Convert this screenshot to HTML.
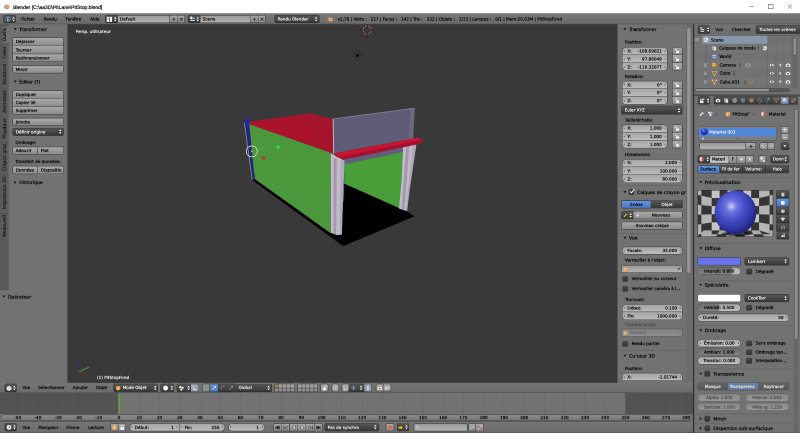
<!DOCTYPE html>
<html lang="fr"><head><meta charset="utf-8"><title>Blender</title>
<style>
html,body{margin:0;padding:0;background:#727272;overflow:hidden}
body{width:800px;height:433px;position:relative}
#o{position:absolute;left:0;top:0;width:1600px;height:866px;transform:scale(.5);transform-origin:0 0;will-change:transform;overflow:hidden}
#r{position:absolute;left:0;top:0;width:1920px;height:1040px;transform:scale(0.8333333);transform-origin:0 0;text-rendering:geometricPrecision;
 font-family:"DejaVu Sans","Liberation Sans",sans-serif;font-size:11px;color:#000;overflow:hidden;background:#727272}
#r div,#r span.t,#r svg{position:absolute;box-sizing:border-box}
#r span.t{line-height:16px;height:16px;white-space:nowrap;-webkit-text-stroke:0.45px currentColor}
.w{color:#fff;-webkit-text-stroke-width:.25px!important}.g{color:#4d4d4d}.lg{color:#e8e8e8}
.win{font-family:"Liberation Sans","DejaVu Sans",sans-serif;font-size:12px}
.b{border:1px solid #262626;border-radius:4px;background:linear-gradient(#a9a9a9,#8b8b8b);box-shadow:0 1px 0 rgba(255,255,255,.07)}
.num{border:1px solid #3a3a3a;border-radius:10px;background:linear-gradient(#a6a6a6,#bcbcbc);box-shadow:0 1px 0 rgba(255,255,255,.07)}
.tf{border:1px solid #262626;border-radius:4px;background:linear-gradient(#999,#b3b3b3);box-shadow:0 1px 0 rgba(255,255,255,.07)}
.m{border:1px solid #1c1c1c;border-radius:4px;background:linear-gradient(#575757,#373737);box-shadow:0 1px 0 rgba(255,255,255,.07)}
.sel{border:1px solid #1c1c1c;border-radius:4px;background:linear-gradient(#6197e0,#4878c4);box-shadow:0 1px 0 rgba(255,255,255,.07)}
.ck{border:1px solid #1c1c1c;border-radius:3px;background:linear-gradient(#4a4a4a,#323232);box-shadow:0 1px 0 rgba(255,255,255,.07)}
.sl{border:1px solid #3a3a3a;border-radius:10px;background:linear-gradient(#a8a8a8,#c2c2c2);box-shadow:0 1px 0 rgba(255,255,255,.07);overflow:hidden}
.sl i{position:absolute;left:0;top:0;bottom:0;background:linear-gradient(#6e6e6e,#828282);display:block}
.rt{border-bottom-left-radius:0!important;border-bottom-right-radius:0!important}
.rb{border-top-left-radius:0!important;border-top-right-radius:0!important}
.rn{border-radius:0!important}
.rl{border-top-right-radius:0!important;border-bottom-right-radius:0!important}
.rr{border-top-left-radius:0!important;border-bottom-left-radius:0!important}
.nt{border-top:none!important}.nl{border-left:none!important}
.dis{opacity:.45}
</style></head>
<body><div id="o"><div id="r">
<div style="left:0px;top:0px;width:1920px;height:31.7px;background:#fff"></div>
<div style="left:0px;top:31.7px;width:1920px;height:25.9px;background:linear-gradient(#777,#6a6a6a)"></div>
<div style="left:0px;top:57.6px;width:162px;height:639.6px;background:#727272"></div>
<div style="left:0px;top:57.6px;width:20.6px;height:639.6px;background:#595959"></div>
<div style="left:0px;top:697.2px;width:162px;height:222px;background:#727272;border-top:1px solid #7c7c7c"></div>
<div style="left:162px;top:57.6px;width:1320px;height:861.6px;background:#393939;border-left:2px solid #343434"></div>
<div style="left:1482px;top:57.6px;width:182.4px;height:861.6px;background:#727272"></div>
<div style="left:0px;top:919.2px;width:1664.4px;height:23.5px;background:linear-gradient(#767676,#6b6b6b)"></div>
<div style="left:0px;top:942.7px;width:1664.4px;height:51.4px;background:#535353"></div>
<div style="left:285.6px;top:942.7px;width:1215.6px;height:51.4px;background:#727272"></div>
<div style="left:0px;top:994.1px;width:1664.4px;height:16.8px;background:#727272"></div>
<div style="left:0px;top:1010.9px;width:1664.4px;height:28.3px;background:linear-gradient(#767676,#6b6b6b)"></div>
<div style="left:1665.6px;top:57.6px;width:254.4px;height:172.8px;background:#727272"></div>
<div style="left:1665.6px;top:57.6px;width:254.4px;height:27.4px;background:linear-gradient(#767676,#6b6b6b)"></div>
<div style="left:1665.6px;top:230.4px;width:254.4px;height:26.4px;background:linear-gradient(#767676,#6b6b6b);border-top:1px solid #3f3f3f"></div>
<div style="left:1665.6px;top:256.8px;width:254.4px;height:782.4px;background:#727272"></div>
<div style="left:0px;top:56.6px;width:1920px;height:1.4px;background:#4c4c4c"></div>
<div style="left:0px;top:1037.5px;width:1920px;height:1.9px;background:#454545"></div>
<svg style="left:7.7px;top:7.7px;" width="15.8" height="15.8" viewBox="0 0 16 16"><ellipse cx="9" cy="9" rx="6" ry="5" fill="#f5792a"/><circle cx="9.5" cy="9" r="2.8" fill="#fff"/><circle cx="9.5" cy="9" r="1.6" fill="#265787"/><path d="M1 8 L8 3.2 M2 10.5 L6 8" stroke="#f5792a" stroke-width="1.6" fill="none"/></svg>
<span class="t win" style="left:31.4px;top:8.8px;">Blender [C:\aa3D\PitLane\PitStop.blend]</span>
<svg style="left:1785.6px;top:4.8px;" width="124.8" height="21.6" viewBox="0 0 124.8 21.6"><path d="M12.8 10.6 H22.8" stroke="#222" stroke-width="1"/><rect x="58.2" y="5.2" width="11.2" height="10.8" fill="none" stroke="#222" stroke-width="1"/><path d="M104.8 5.4 L115 15.8 M115 5.4 L104.8 15.8" stroke="#222" stroke-width="1"/></svg>
<div class="m" style="left:7.9px;top:36px;width:29.8px;height:19.2px;"></div>
<svg style="left:11px;top:38.2px;" width="15.8" height="15.8" viewBox="0 0 16 16"><circle cx="8" cy="8" r="6.6" fill="#34506f" stroke="#7d94b4" stroke-width="1.3"/><rect x="7" y="6.8" width="2.2" height="5.4" fill="#fff"/><rect x="7" y="3.4" width="2.2" height="2.2" fill="#fff"/></svg>
<svg style="left:29px;top:38.6px;" width="7.2" height="13.9" viewBox="0 0 7.2 14"><path d="M0.6 5.6 L3.6 1.4 L6.6 5.6 Z M0.6 8.4 L3.6 12.6 L6.6 8.4 Z" fill="#fff"/></svg>
<span class="t" style="left:51.1px;top:38.8px;font-size:10px">Fichier</span>
<span class="t" style="left:104.6px;top:38.8px;font-size:10px">Rendu</span>
<span class="t" style="left:157.4px;top:38.8px;font-size:10px">Fenêtre</span>
<span class="t" style="left:216.5px;top:38.8px;font-size:10px">Aide</span>
<div class="m rl" style="left:251.8px;top:36px;width:31.2px;height:19.2px;"></div>
<svg style="left:255.4px;top:38.6px;" width="14.9" height="14.9" viewBox="0 0 15.4 15.4"><rect x="1" y="1.5" width="7" height="4.6" fill="#f2f2f2"/><rect x="1" y="7.4" width="7" height="6.6" fill="#f2f2f2"/><rect x="9.4" y="1.5" width="5" height="12.5" fill="#f2f2f2"/></svg>
<svg style="left:273.4px;top:38.6px;" width="7.2" height="13.9" viewBox="0 0 7.2 14"><path d="M0.6 5.6 L3.6 1.4 L6.6 5.6 Z M0.6 8.4 L3.6 12.6 L6.6 8.4 Z" fill="#fff"/></svg>
<div class="tf rn nl" style="left:283px;top:36px;width:125px;height:19.2px;"></div>
<span class="t" style="left:288px;top:38.8px;font-size:10px">Default</span>
<div class="b rn nl" style="left:408px;top:36px;width:17.8px;height:19.2px;"></div>
<svg style="left:410.9px;top:39.8px;" width="12" height="12" viewBox="0 0 12 12"><path d="M6 1.5 V10.5 M1.5 6 H10.5" stroke="#222" stroke-width="1.7"/></svg>
<div class="b rr nl" style="left:425.8px;top:36px;width:17.8px;height:19.2px;"></div>
<svg style="left:428.6px;top:39.8px;" width="12" height="12" viewBox="0 0 12 12"><path d="M2.5 2.5 L9.5 9.5 M9.5 2.5 L2.5 9.5" stroke="#222" stroke-width="1.7"/></svg>
<div class="m rl" style="left:450.7px;top:36px;width:30.2px;height:19.2px;"></div>
<svg style="left:453.6px;top:38.4px;" width="15.4" height="15.4" viewBox="0 0 16 16"><circle cx="5" cy="5" r="3" fill="#fff"/><circle cx="11" cy="6" r="2.6" fill="#9cc3f5"/><path d="M2 13 L7 8.5 L10 11.5 L13 9.5 L14.5 13 Z" fill="#e8e8e8"/></svg>
<svg style="left:471.1px;top:38.6px;" width="7.2" height="13.9" viewBox="0 0 7.2 14"><path d="M0.6 5.6 L3.6 1.4 L6.6 5.6 Z M0.6 8.4 L3.6 12.6 L6.6 8.4 Z" fill="#fff"/></svg>
<div class="tf rn nl" style="left:481px;top:36px;width:121px;height:19.2px;"></div>
<span class="t" style="left:486.2px;top:38.8px;font-size:10px">Scene</span>
<div class="b rn nl" style="left:601.9px;top:36px;width:17.8px;height:19.2px;"></div>
<svg style="left:604.8px;top:39.8px;" width="12" height="12" viewBox="0 0 12 12"><path d="M6 1.5 V10.5 M1.5 6 H10.5" stroke="#222" stroke-width="1.7"/></svg>
<div class="b rr nl" style="left:619.7px;top:36px;width:17.8px;height:19.2px;"></div>
<svg style="left:622.6px;top:39.8px;" width="12" height="12" viewBox="0 0 12 12"><path d="M2.5 2.5 L9.5 9.5 M9.5 2.5 L2.5 9.5" stroke="#222" stroke-width="1.7"/></svg>
<div class="m" style="left:658.6px;top:36px;width:108.5px;height:19.2px;"></div>
<span class="t w" style="left:666.2px;top:38.8px;font-size:10px">Rendu Blender</span>
<svg style="left:754.8px;top:38.6px;" width="7.2" height="13.9" viewBox="0 0 7.2 14"><path d="M0.6 5.6 L3.6 1.4 L6.6 5.6 Z M0.6 8.4 L3.6 12.6 L6.6 8.4 Z" fill="#fff"/></svg>
<svg style="left:784.3px;top:38.2px;" width="16.3" height="16.3" viewBox="0 0 16 16"><ellipse cx="9" cy="9" rx="6" ry="5" fill="#e8893a"/><circle cx="9.5" cy="9" r="2.9" fill="#fff"/><circle cx="9.5" cy="9" r="1.6" fill="#27548a"/><path d="M1 8 L8 3.2 M2 10.5 L6 8" stroke="#e8893a" stroke-width="1.6" fill="none"/></svg>
<span class="t" style="left:810.2px;top:38.8px;font-size:10px">v2.78 | Verts :&nbsp;&nbsp;&nbsp;217 | Faces :&nbsp;&nbsp;&nbsp;142 | Tris :&nbsp;&nbsp;&nbsp;332 | Objets :&nbsp;&nbsp;&nbsp;1/13 | Lampes :&nbsp;&nbsp;&nbsp;0/1 | Mem:20.63M | PitStopFond</span>
<div style="left:3.6px;top:63.1px;width:17.3px;height:39.7px;background:#727272;border:1px solid #3a3a3a;border-right:none;border-radius:4px 0 0 4px;box-shadow:0 1px 0 rgba(255,255,255,.10)"></div>
<span class="t" style="left:10.6px;top:75.0px;font-size:11px;transform:translateX(-50%) rotate(-90deg);transform-origin:50% 50%;color:#000">Outils</span>
<div style="left:3.6px;top:106.8px;width:17.3px;height:38px;background:#5f5f5f;border:1px solid #4b4b4b;border-right:none;border-radius:4px 0 0 4px;box-shadow:0 1px 0 rgba(255,255,255,.10)"></div>
<span class="t" style="left:10.6px;top:117.8px;font-size:11px;transform:translateX(-50%) rotate(-90deg);transform-origin:50% 50%;color:#151515">Créer</span>
<div style="left:3.6px;top:148.8px;width:17.3px;height:58.4px;background:#5f5f5f;border:1px solid #4b4b4b;border-right:none;border-radius:4px 0 0 4px;box-shadow:0 1px 0 rgba(255,255,255,.10)"></div>
<span class="t" style="left:10.6px;top:170.0px;font-size:11px;transform:translateX(-50%) rotate(-90deg);transform-origin:50% 50%;color:#151515">Relations</span>
<div style="left:3.6px;top:211.2px;width:17.3px;height:64.2px;background:#5f5f5f;border:1px solid #4b4b4b;border-right:none;border-radius:4px 0 0 4px;box-shadow:0 1px 0 rgba(255,255,255,.10)"></div>
<span class="t" style="left:10.6px;top:235.3px;font-size:11px;transform:translateX(-50%) rotate(-90deg);transform-origin:50% 50%;color:#151515">Animation</span>
<div style="left:3.6px;top:279.4px;width:17.3px;height:57.7px;background:#5f5f5f;border:1px solid #4b4b4b;border-right:none;border-radius:4px 0 0 4px;box-shadow:0 1px 0 rgba(255,255,255,.10)"></div>
<span class="t" style="left:10.6px;top:300.2px;font-size:11px;transform:translateX(-50%) rotate(-90deg);transform-origin:50% 50%;color:#151515">Physique</span>
<div style="left:3.6px;top:341px;width:17.3px;height:74.7px;background:#5f5f5f;border:1px solid #4b4b4b;border-right:none;border-radius:4px 0 0 4px;box-shadow:0 1px 0 rgba(255,255,255,.10)"></div>
<span class="t" style="left:10.6px;top:370.4px;font-size:11px;transform:translateX(-50%) rotate(-90deg);transform-origin:50% 50%;color:#151515">Crayon gras</span>
<div style="left:3.6px;top:419.8px;width:17.3px;height:87.2px;background:#5f5f5f;border:1px solid #4b4b4b;border-right:none;border-radius:4px 0 0 4px;box-shadow:0 1px 0 rgba(255,255,255,.10)"></div>
<span class="t" style="left:10.6px;top:455.4px;font-size:11px;transform:translateX(-50%) rotate(-90deg);transform-origin:50% 50%;color:#151515">Impression 3D</span>
<div style="left:3.6px;top:511px;width:17.3px;height:62.2px;background:#5f5f5f;border:1px solid #4b4b4b;border-right:none;border-radius:4px 0 0 4px;box-shadow:0 1px 0 rgba(255,255,255,.10)"></div>
<span class="t" style="left:10.6px;top:534.1px;font-size:11px;transform:translateX(-50%) rotate(-90deg);transform-origin:50% 50%;color:#151515">MeasureIt</span>
<svg style="left:32.6px;top:66.2px;" width="7.7" height="7.7" viewBox="0 0 9 9"><path d="M0 1.5 L9 1.5 L4.5 8 Z" fill="#1a1a1a"/></svg>
<span class="t" style="left:46.1px;top:63.3px;font-size:11px">Transformer</span>
<div class="b rt" style="left:30px;top:90.2px;width:123.1px;height:19.7px;"></div>
<span class="t" style="left:37.7px;top:93.3px;font-size:10px">Déplacer</span>
<div class="b rn nt" style="left:30px;top:109.9px;width:123.1px;height:19.7px;"></div>
<span class="t" style="left:37.7px;top:113.0px;font-size:10px">Tourner</span>
<div class="b rb nt" style="left:30px;top:129.6px;width:123.1px;height:19.7px;"></div>
<span class="t" style="left:37.7px;top:132.6px;font-size:10px">Redimensionner</span>
<div class="b" style="left:30px;top:157px;width:123.1px;height:18.7px;"></div>
<span class="t" style="left:37.7px;top:159.5px;font-size:10px">Miroir</span>
<svg style="left:32.6px;top:192px;" width="7.7" height="7.7" viewBox="0 0 9 9"><path d="M0 1.5 L9 1.5 L4.5 8 Z" fill="#1a1a1a"/></svg>
<span class="t" style="left:46.1px;top:189.0px;font-size:11px">Éditer (?)</span>
<div class="b rt" style="left:30px;top:217.4px;width:123.1px;height:19.2px;"></div>
<span class="t" style="left:37.7px;top:220.2px;font-size:10px">Dupliquer</span>
<div class="b rn nt" style="left:30px;top:236.6px;width:123.1px;height:19.2px;"></div>
<span class="t" style="left:37.7px;top:239.4px;font-size:10px">Copier lié</span>
<div class="b rb nt" style="left:30px;top:255.8px;width:123.1px;height:19.2px;"></div>
<span class="t" style="left:37.7px;top:258.6px;font-size:10px">Supprimer</span>
<div class="b" style="left:30px;top:283px;width:123.1px;height:19.2px;"></div>
<span class="t" style="left:37.7px;top:285.8px;font-size:10px">Joindre</span>
<div class="m" style="left:30px;top:306.7px;width:123.1px;height:19.2px;"></div>
<span class="t w" style="left:37.7px;top:309.5px;font-size:10px">Définir origine</span>
<svg style="left:140.9px;top:309.4px;" width="7.2" height="13.9" viewBox="0 0 7.2 14"><path d="M0.6 5.6 L3.6 1.4 L6.6 5.6 Z M0.6 8.4 L3.6 12.6 L6.6 8.4 Z" fill="#fff"/></svg>
<span class="t" style="left:37px;top:336.4px;font-size:10px">Ombrage:</span>
<div class="b rl" style="left:30px;top:352.3px;width:60.5px;height:19.2px;"></div>
<span class="t" style="left:37.7px;top:355.1px;font-size:10px">Adoucir</span>
<div class="b rr nl" style="left:90.5px;top:352.3px;width:62.6px;height:19.2px;"></div>
<span class="t" style="left:98.2px;top:355.1px;font-size:10px">Plat</span>
<span class="t" style="left:37px;top:381.0px;font-size:10px">Transfert de données:</span>
<div class="b rl" style="left:30px;top:398.4px;width:60.5px;height:19.2px;"></div>
<span class="t" style="left:37.7px;top:401.2px;font-size:10px">Données</span>
<div class="b rr nl" style="left:90.5px;top:398.4px;width:62.6px;height:19.2px;"></div>
<span class="t" style="left:98.2px;top:401.2px;font-size:10px">Dispositio</span>
<svg style="left:32.6px;top:433.9px;" width="7.7" height="7.7" viewBox="0 0 9 9"><path d="M1.5 0 L8 4.5 L1.5 9 Z" fill="#1a1a1a"/></svg>
<span class="t" style="left:46.1px;top:431.0px;font-size:11px">Historique</span>
<svg style="left:5.3px;top:708px;" width="7.7" height="7.7" viewBox="0 0 9 9"><path d="M0 1.5 L9 1.5 L4.5 8 Z" fill="#1a1a1a"/></svg>
<span class="t" style="left:18.7px;top:705.0px;font-size:11px">Opérateur</span>
<svg style="left:162px;top:57.6px" width="1320" height="861.6" viewBox="67.5 24 550 359">
<polygon points="252.6,180.2 343.2,246 414.4,216.2 406.4,210.8 401,208.6 344.2,183.2 344.2,200 330.6,232.8 254.5,178.6" fill="#000"/>
<polygon points="343,159 404.4,146.6 404.2,152 343.4,164.8" fill="#625d7c"/>
<polygon points="344.2,164.3 404,151.5 401.2,208.8 344.2,183.4" fill="#4a9e39"/>
<polygon points="249.2,123.8 333.3,153.4 331,160 330.6,232.9 254.6,178.7" fill="#4b983c"/>
<polygon points="245.4,123.2 249.2,123.6 254.6,178.6 252.8,179.6" fill="#1c2686"/>
<polyline points="244.4,123 252.2,179.8" fill="none" stroke="#aaa3b8" stroke-width="0.6"/>
<polygon points="249.6,121.4 311.5,113.1 322,116.4 332.8,118.5 333.4,153.6 249.4,124" fill="#a5132c"/>
<polygon points="249.6,122.4 300,115 318,136 296,140.6" fill="#b81431" opacity=".3"/>
<polygon points="332.8,118.7 414.8,108.1 413.1,138.4 333.5,153.2" fill="#5e5c76"/>
<polygon points="410.6,108.7 414.8,108.1 413.1,138.4 409.2,139.1" fill="#6a6883"/>
<polyline points="332.8,118.7 414.8,108.1" fill="none" stroke="#8685a0" stroke-width="0.7"/>
<polyline points="333.1,118.8 333.7,153.4" fill="none" stroke="#c9bfce" stroke-width="0.9"/>
<!-- left pillar -->
<polygon points="330.8,153.6 334,154.4 344.4,160.5 341.8,234.4 337,234.9 330.8,232.6" fill="#c2bac8"/>
<polygon points="333.6,158 336.8,159 336.2,234.2 333.6,233.4" fill="#a199ae"/>
<polygon points="340.6,160 344.4,160.8 341.8,234.2 339.8,234.6" fill="#b0a8ba"/>
<!-- right pillar -->
<polygon points="403.2,146 416.6,142.6 409.6,190 406.6,210.8 399,208.4 401.6,180" fill="#c2bac8"/>
<polygon points="406.2,146.4 409.4,145.6 404.4,209.8 401.6,209" fill="#a199ae"/>
<polygon points="412.8,144 416.6,142.8 409.8,188 407.2,210.6 405.6,210.2 409,180" fill="#b0a8ba"/>
<!-- awning -->
<polygon points="333.6,153.4 413.2,138.4 417.4,137.2 423.4,141 420.4,143.6 343,159.6 335.8,156.2" fill="#a3122a"/>
<polygon points="333.6,153.4 413.2,138.4 417.4,137.2 421.6,139.8 339.6,156.8" fill="#c81533"/>
<!-- manipulator -->
<polygon points="246.9,116 249.4,123.2 244.6,123.2" fill="#2020d8"/>
<polyline points="247.2,123 251.4,150" fill="none" stroke="#2a2ae8" stroke-width="0.6" opacity=".5"/>
<circle cx="251.8" cy="151.2" r="5.5" fill="none" stroke="#e6e6e6" stroke-width="0.7"/>
<circle cx="263.6" cy="157.8" r="1.7" fill="#e02a18"/>
<circle cx="278.2" cy="146.8" r="1.8" fill="#22e03a"/>
<polyline points="253,151.6 262,157" fill="none" stroke="#d0302a" stroke-width="0.5" opacity=".5"/>
<polyline points="253.6,150.8 276.6,147" fill="none" stroke="#30d040" stroke-width="0.5" opacity=".5"/>
<circle cx="251.8" cy="151.2" r="0.9" fill="#ffae3a"/>
<!-- 3D cursor -->
<g opacity=".6">
<circle cx="367.2" cy="29.8" r="4.2" fill="none" stroke="#f2eeee" stroke-width="0.65"/>
<circle cx="367.2" cy="29.8" r="4.2" fill="none" stroke="#b01818" stroke-width="0.65" stroke-dasharray="1.6 1.6"/>
<path d="M367.2 22 V27.4 M367.2 32.2 V37.6 M359.4 29.8 H364.8 M369.6 29.8 H375" stroke="#0a0a0a" stroke-width="0.55"/>
</g>
<!-- lamp -->
<circle cx="357.4" cy="55.2" r="1.5" fill="#050505"/>
<circle cx="357.4" cy="55.2" r="3.6" fill="none" stroke="#151515" stroke-width="0.5" stroke-dasharray="1 0.8" opacity=".8"/>
<circle cx="357.4" cy="55.2" r="5.2" fill="none" stroke="#1c1c1c" stroke-width="0.4" stroke-dasharray="1 1.1" opacity=".6"/>
<!-- mini axis -->
<path d="M78.5 371.6 L77.6 360.6" stroke="#2b2bd8" stroke-width="0.8" opacity=".9"/>
<path d="M78.5 371.6 L89 367" stroke="#2fbf3a" stroke-width="0.8"/>
<path d="M78.5 371.6 L86 374" stroke="#a02a2a" stroke-width="0.8" opacity=".8"/>
</svg>
<span class="t w" style="left:181.4px;top:69.0px;font-size:10px">Persp. utilisateur</span>
<span class="t w" style="left:232.8px;top:898.5px;font-size:10px">(1) PitStopFond</span>
<div class="m" style="left:10.8px;top:921.4px;width:29.5px;height:19.2px;"></div>
<svg style="left:14.2px;top:923.8px;" width="15.4" height="15.4" viewBox="0 0 16 16"><path d="M2 5 L8 2 L14 5 L14 12 L8 15 L2 12 Z" fill="#ededed"/><path d="M2 5 L8 8 L14 5 M8 8 V15" stroke="#9a9a9a" stroke-width="1" fill="none"/></svg>
<svg style="left:31.4px;top:924px;" width="7.2" height="13.9" viewBox="0 0 7.2 14"><path d="M0.6 5.6 L3.6 1.4 L6.6 5.6 Z M0.6 8.4 L3.6 12.6 L6.6 8.4 Z" fill="#fff"/></svg>
<span class="t" style="left:53.8px;top:924.2px;font-size:10px">Vue</span>
<span class="t" style="left:92.2px;top:924.2px;font-size:10px">Sélectionner</span>
<span class="t" style="left:174.7px;top:924.2px;font-size:10px">Ajouter</span>
<span class="t" style="left:230.2px;top:924.2px;font-size:10px">Objet</span>
<div class="m" style="left:271.9px;top:921.4px;width:107.5px;height:19.2px;"></div>
<svg style="left:276px;top:924px;" width="14.9" height="14.9" viewBox="0 0 16 16"><path d="M3 4.6 L9 2.4 L13.4 4.4 L13.4 11.6 L7.6 14 L3 11.6 Z" fill="#f0a24a"/><path d="M3 4.6 L7.6 6.8 L13.4 4.4 M7.6 6.8 V14" stroke="#fbe0b8" stroke-width="1.1" fill="none"/></svg>
<span class="t w" style="left:294.2px;top:924.2px;font-size:10px">Mode Objet</span>
<svg style="left:369.4px;top:924px;" width="7.2" height="13.9" viewBox="0 0 7.2 14"><path d="M0.6 5.6 L3.6 1.4 L6.6 5.6 Z M0.6 8.4 L3.6 12.6 L6.6 8.4 Z" fill="#fff"/></svg>
<div class="m" style="left:385px;top:921.4px;width:33.1px;height:19.2px;"></div>
<svg style="left:389.5px;top:924px;" width="14.9" height="14.9" viewBox="0 0 16 16"><circle cx="8" cy="8" r="6.3" fill="#f4f4f4"/><circle cx="6.2" cy="6" r="2" fill="#fff"/></svg>
<svg style="left:408.7px;top:924px;" width="7.2" height="13.9" viewBox="0 0 7.2 14"><path d="M0.6 5.6 L3.6 1.4 L6.6 5.6 Z M0.6 8.4 L3.6 12.6 L6.6 8.4 Z" fill="#fff"/></svg>
<div class="m rl" style="left:424.1px;top:921.4px;width:33.8px;height:19.2px;"></div>
<svg style="left:427.9px;top:924px;" width="15.4" height="15.4" viewBox="0 0 16 16"><circle cx="5" cy="5.4" r="3" fill="#f2f2f2"/><circle cx="11" cy="7" r="2.6" fill="#f2f2f2"/><circle cx="7.4" cy="11.6" r="2.6" fill="#f2f2f2"/><circle cx="8" cy="8" r="1.2" fill="#e8a13a"/></svg>
<svg style="left:448.8px;top:924px;" width="7.2" height="13.9" viewBox="0 0 7.2 14"><path d="M0.6 5.6 L3.6 1.4 L6.6 5.6 Z M0.6 8.4 L3.6 12.6 L6.6 8.4 Z" fill="#fff"/></svg>
<div class="b rr nl" style="left:457.9px;top:921.4px;width:20.6px;height:19.2px;background:linear-gradient(#9fa9b6,#8d97a4)"></div>
<svg style="left:460.8px;top:924.2px;" width="14.4" height="14.4" viewBox="0 0 16 16"><path d="M3 13 V4 M3 13 H12 M3 13 L9 8" stroke="#e8eef8" stroke-width="1.5" fill="none"/><circle cx="3" cy="4" r="1.3" fill="#dfe7f5"/><circle cx="12" cy="13" r="1.3" fill="#dfe7f5"/></svg>
<div class="b rl" style="left:484.8px;top:921.4px;width:19.7px;height:19.2px;background:linear-gradient(#8f9691,#7d857f)"></div>
<svg style="left:487.7px;top:924.2px;" width="14.4" height="14.4" viewBox="0 0 16 16"><path d="M3.4 12.6 V2.6" stroke="#5fd45f" stroke-width="1.6"/><path d="M3.4 12.6 H13.4" stroke="#e86a5a" stroke-width="1.6"/><path d="M3.4 12.6 L10.4 6.4" stroke="#6f8fe8" stroke-width="1.6"/></svg>
<div class="sel rn nl" style="left:504.5px;top:921.4px;width:19.4px;height:19.2px;"></div>
<svg style="left:507.4px;top:924.2px;" width="14.4" height="14.4" viewBox="0 0 16 16"><path d="M3 13 L12 4 M12 4 H7.5 M12 4 V8.5" stroke="#e6efff" stroke-width="1.7" fill="none"/></svg>
<div class="m rn nl" style="left:523.9px;top:921.4px;width:19.7px;height:19.2px;"></div>
<svg style="left:526.8px;top:924.2px;" width="14.4" height="14.4" viewBox="0 0 16 16"><path d="M4 13 C4 7 7 4 12 4" stroke="#7f95b8" stroke-width="1.6" fill="none"/></svg>
<div class="m rn nl" style="left:543.6px;top:921.4px;width:19.4px;height:19.2px;"></div>
<svg style="left:546.5px;top:924.2px;" width="14.4" height="14.4" viewBox="0 0 16 16"><path d="M3.5 13 L11 5.5" stroke="#8fa0bd" stroke-width="1.5" fill="none"/><rect x="9.6" y="3" width="3.6" height="3.6" fill="#a8b7d0"/></svg>
<div class="m rr nl" style="left:563px;top:921.4px;width:89.8px;height:19.2px;"></div>
<span class="t w" style="left:572.6px;top:924.2px;font-size:10px">Global</span>
<svg style="left:640.6px;top:924px;" width="7.2" height="13.9" viewBox="0 0 7.2 14"><path d="M0.6 5.6 L3.6 1.4 L6.6 5.6 Z M0.6 8.4 L3.6 12.6 L6.6 8.4 Z" fill="#fff"/></svg>
<div style="left:658.6px;top:921.4px;width:49px;height:19.2px;background:linear-gradient(#a6a6a6,#8a8a8a);border:1px solid #262626;border-radius:3px;box-shadow:0 1px 0 rgba(255,255,255,.07)"></div>
<div style="left:668.2px;top:922.1px;width:1px;height:17.8px;background:#2e2e2e"></div>
<div style="left:677.8px;top:922.1px;width:1px;height:17.8px;background:#2e2e2e"></div>
<div style="left:687.4px;top:922.1px;width:1px;height:17.8px;background:#2e2e2e"></div>
<div style="left:697px;top:922.1px;width:1px;height:17.8px;background:#2e2e2e"></div>
<div style="left:659.3px;top:930.7px;width:47.5px;height:1px;background:#2e2e2e"></div>
<div style="left:659.6px;top:922.4px;width:8.6px;height:8.4px;background:#6b6b6b"></div>
<div style="left:661.9px;top:924.5px;width:3.8px;height:3.8px;background:#f0a030;border-radius:50%"></div>
<div style="left:714.2px;top:921.4px;width:49px;height:19.2px;background:linear-gradient(#a6a6a6,#8a8a8a);border:1px solid #262626;border-radius:3px;box-shadow:0 1px 0 rgba(255,255,255,.07)"></div>
<div style="left:723.8px;top:922.1px;width:1px;height:17.8px;background:#2e2e2e"></div>
<div style="left:733.4px;top:922.1px;width:1px;height:17.8px;background:#2e2e2e"></div>
<div style="left:743px;top:922.1px;width:1px;height:17.8px;background:#2e2e2e"></div>
<div style="left:752.6px;top:922.1px;width:1px;height:17.8px;background:#2e2e2e"></div>
<div style="left:715px;top:930.7px;width:47.5px;height:1px;background:#2e2e2e"></div>
<div class="b" style="left:769px;top:921.4px;width:19.4px;height:19.2px;"></div>
<svg style="left:771.8px;top:924.2px;" width="14.4" height="14.4" viewBox="0 0 16 16"><rect x="3" y="7" width="9" height="7" fill="#f3f3f3"/><path d="M8.5 7 V5 a3 3 0 0 1 6 0 V6" stroke="#f3f3f3" stroke-width="1.6" fill="none"/></svg>
<div class="b" style="left:795.6px;top:921.4px;width:18.7px;height:19.2px;"></div>
<svg style="left:798px;top:924.2px;" width="14.4" height="14.4" viewBox="0 0 16 16"><circle cx="8" cy="8" r="5.4" fill="none" stroke="#d8d8d8" stroke-width="1.6"/><circle cx="8" cy="8" r="1.8" fill="#d8d8d8"/></svg>
<div class="b rl" style="left:819.6px;top:921.4px;width:18px;height:19.2px;"></div>
<svg style="left:821.8px;top:924.2px;" width="14.4" height="14.4" viewBox="0 0 16 16"><path d="M4 3 V9 a4 4 0 0 0 8 0 V3" stroke="#d6d6d6" stroke-width="2.6" fill="none"/></svg>
<div class="m rn nl" style="left:837.6px;top:921.4px;width:36px;height:19.2px;"></div>
<svg style="left:841.4px;top:924.2px;" width="14.4" height="14.4" viewBox="0 0 16 16"><path d="M8 2 V14 M2 8 H14" stroke="#a9c4ea" stroke-width="1.6"/><path d="M4 4 H12 V12 H4 Z" fill="none" stroke="#7f8da3" stroke-width="0.8"/></svg>
<svg style="left:862.8px;top:924px;" width="7.2" height="13.9" viewBox="0 0 7.2 14"><path d="M0.6 5.6 L3.6 1.4 L6.6 5.6 Z M0.6 8.4 L3.6 12.6 L6.6 8.4 Z" fill="#fff"/></svg>
<div class="b rr nl" style="left:873.6px;top:921.4px;width:18.5px;height:19.2px;background:linear-gradient(#9aa5b3,#8994a2)"></div>
<svg style="left:875.8px;top:924.2px;" width="14.4" height="14.4" viewBox="0 0 16 16"><circle cx="8" cy="5" r="2.6" fill="none" stroke="#eaf1fb" stroke-width="1.5"/><circle cx="8" cy="11.4" r="2.6" fill="none" stroke="#eaf1fb" stroke-width="1.5"/></svg>
<div class="b rl" style="left:901.7px;top:921.4px;width:18.7px;height:19.2px;"></div>
<svg style="left:903.8px;top:924.2px;" width="14.4" height="14.4" viewBox="0 0 16 16"><path d="M2 6 H5 L6.4 4 H10 L11.4 6 H14 V13 H2 Z" fill="#f2e8c8"/><circle cx="8" cy="9.4" r="2.4" fill="#7a6a4a"/></svg>
<div class="b rr nl" style="left:920.4px;top:921.4px;width:18.5px;height:19.2px;"></div>
<svg style="left:922.3px;top:924.2px;" width="14.4" height="14.4" viewBox="0 0 16 16"><rect x="2" y="3" width="12" height="10" fill="#efefef"/><path d="M2 5.5 H14 M2 10.5 H14 M5 3 V5.5 M8 3 V5.5 M11 3 V5.5 M5 10.5 V13 M8 10.5 V13 M11 10.5 V13" stroke="#555" stroke-width="1"/></svg>
<svg style="left:0;top:942.7px" width="1658.4" height="51.4" viewBox="0 392.8 691 21.4"><path d="M17.70 392.8 V414.2" stroke="#000" stroke-opacity=".13" stroke-width="0.42"/><path d="M37.96 392.8 V414.2" stroke="#000" stroke-opacity=".13" stroke-width="0.42"/><path d="M58.22 392.8 V414.2" stroke="#000" stroke-opacity=".13" stroke-width="0.42"/><path d="M78.48 392.8 V414.2" stroke="#000" stroke-opacity=".13" stroke-width="0.42"/><path d="M98.74 392.8 V414.2" stroke="#000" stroke-opacity=".13" stroke-width="0.42"/><path d="M119.00 392.8 V414.2" stroke="#000" stroke-opacity=".13" stroke-width="0.42"/><path d="M139.26 392.8 V414.2" stroke="#000" stroke-opacity=".13" stroke-width="0.42"/><path d="M159.52 392.8 V414.2" stroke="#000" stroke-opacity=".13" stroke-width="0.42"/><path d="M179.78 392.8 V414.2" stroke="#000" stroke-opacity=".13" stroke-width="0.42"/><path d="M200.04 392.8 V414.2" stroke="#000" stroke-opacity=".13" stroke-width="0.42"/><path d="M220.30 392.8 V414.2" stroke="#000" stroke-opacity=".13" stroke-width="0.42"/><path d="M240.56 392.8 V414.2" stroke="#000" stroke-opacity=".13" stroke-width="0.42"/><path d="M260.82 392.8 V414.2" stroke="#000" stroke-opacity=".13" stroke-width="0.42"/><path d="M281.08 392.8 V414.2" stroke="#000" stroke-opacity=".13" stroke-width="0.42"/><path d="M301.34 392.8 V414.2" stroke="#000" stroke-opacity=".13" stroke-width="0.42"/><path d="M321.60 392.8 V414.2" stroke="#000" stroke-opacity=".13" stroke-width="0.42"/><path d="M341.86 392.8 V414.2" stroke="#000" stroke-opacity=".13" stroke-width="0.42"/><path d="M362.12 392.8 V414.2" stroke="#000" stroke-opacity=".13" stroke-width="0.42"/><path d="M382.38 392.8 V414.2" stroke="#000" stroke-opacity=".13" stroke-width="0.42"/><path d="M402.64 392.8 V414.2" stroke="#000" stroke-opacity=".13" stroke-width="0.42"/><path d="M422.90 392.8 V414.2" stroke="#000" stroke-opacity=".13" stroke-width="0.42"/><path d="M443.16 392.8 V414.2" stroke="#000" stroke-opacity=".13" stroke-width="0.42"/><path d="M463.42 392.8 V414.2" stroke="#000" stroke-opacity=".13" stroke-width="0.42"/><path d="M483.68 392.8 V414.2" stroke="#000" stroke-opacity=".13" stroke-width="0.42"/><path d="M503.94 392.8 V414.2" stroke="#000" stroke-opacity=".13" stroke-width="0.42"/><path d="M524.20 392.8 V414.2" stroke="#000" stroke-opacity=".13" stroke-width="0.42"/><path d="M544.46 392.8 V414.2" stroke="#000" stroke-opacity=".13" stroke-width="0.42"/><path d="M564.72 392.8 V414.2" stroke="#000" stroke-opacity=".13" stroke-width="0.42"/><path d="M584.98 392.8 V414.2" stroke="#000" stroke-opacity=".13" stroke-width="0.42"/><path d="M605.24 392.8 V414.2" stroke="#000" stroke-opacity=".13" stroke-width="0.42"/><path d="M625.50 392.8 V414.2" stroke="#000" stroke-opacity=".13" stroke-width="0.42"/><path d="M645.76 392.8 V414.2" stroke="#000" stroke-opacity=".13" stroke-width="0.42"/><path d="M666.02 392.8 V414.2" stroke="#000" stroke-opacity=".13" stroke-width="0.42"/><path d="M686.28 392.8 V414.2" stroke="#000" stroke-opacity=".13" stroke-width="0.42"/><path d="M0 407.4 H691" stroke="#000" stroke-opacity="0" stroke-width="0.4"/><path d="M119 392.8 V414.2" stroke="#62d020" stroke-width="0.95"/></svg>
<div style="left:2.9px;top:995.3px;width:1658.4px;height:13.7px;background:linear-gradient(#8a8a8a,#7a7a7a);border:1px solid #3e3e3e;border-radius:5px"></div>
<span class="t" style="left:-77.5px;width:240px;text-align:center;top:996.4px;font-size:10px">-50</span>
<span class="t" style="left:-28.9px;width:240px;text-align:center;top:996.4px;font-size:10px">-40</span>
<span class="t" style="left:19.7px;width:240px;text-align:center;top:996.4px;font-size:10px">-30</span>
<span class="t" style="left:68.4px;width:240px;text-align:center;top:996.4px;font-size:10px">-20</span>
<span class="t" style="left:117px;width:240px;text-align:center;top:996.4px;font-size:10px">-10</span>
<span class="t" style="left:165.6px;width:240px;text-align:center;top:996.4px;font-size:10px">0</span>
<span class="t" style="left:214.2px;width:240px;text-align:center;top:996.4px;font-size:10px">10</span>
<span class="t" style="left:262.8px;width:240px;text-align:center;top:996.4px;font-size:10px">20</span>
<span class="t" style="left:311.5px;width:240px;text-align:center;top:996.4px;font-size:10px">30</span>
<span class="t" style="left:360.1px;width:240px;text-align:center;top:996.4px;font-size:10px">40</span>
<span class="t" style="left:408.7px;width:240px;text-align:center;top:996.4px;font-size:10px">50</span>
<span class="t" style="left:457.3px;width:240px;text-align:center;top:996.4px;font-size:10px">60</span>
<span class="t" style="left:506px;width:240px;text-align:center;top:996.4px;font-size:10px">70</span>
<span class="t" style="left:554.6px;width:240px;text-align:center;top:996.4px;font-size:10px">80</span>
<span class="t" style="left:603.2px;width:240px;text-align:center;top:996.4px;font-size:10px">90</span>
<span class="t" style="left:651.8px;width:240px;text-align:center;top:996.4px;font-size:10px">100</span>
<span class="t" style="left:700.5px;width:240px;text-align:center;top:996.4px;font-size:10px">110</span>
<span class="t" style="left:749.1px;width:240px;text-align:center;top:996.4px;font-size:10px">120</span>
<span class="t" style="left:797.7px;width:240px;text-align:center;top:996.4px;font-size:10px">130</span>
<span class="t" style="left:846.3px;width:240px;text-align:center;top:996.4px;font-size:10px">140</span>
<span class="t" style="left:895px;width:240px;text-align:center;top:996.4px;font-size:10px">150</span>
<span class="t" style="left:943.6px;width:240px;text-align:center;top:996.4px;font-size:10px">160</span>
<span class="t" style="left:992.2px;width:240px;text-align:center;top:996.4px;font-size:10px">170</span>
<span class="t" style="left:1040.8px;width:240px;text-align:center;top:996.4px;font-size:10px">180</span>
<span class="t" style="left:1089.5px;width:240px;text-align:center;top:996.4px;font-size:10px">190</span>
<span class="t" style="left:1138.1px;width:240px;text-align:center;top:996.4px;font-size:10px">200</span>
<span class="t" style="left:1186.7px;width:240px;text-align:center;top:996.4px;font-size:10px">210</span>
<span class="t" style="left:1235.3px;width:240px;text-align:center;top:996.4px;font-size:10px">220</span>
<span class="t" style="left:1284px;width:240px;text-align:center;top:996.4px;font-size:10px">230</span>
<span class="t" style="left:1332.6px;width:240px;text-align:center;top:996.4px;font-size:10px">240</span>
<span class="t" style="left:1381.2px;width:240px;text-align:center;top:996.4px;font-size:10px">250</span>
<span class="t" style="left:1429.8px;width:240px;text-align:center;top:996.4px;font-size:10px">260</span>
<span class="t" style="left:1478.4px;width:240px;text-align:center;top:996.4px;font-size:10px">270</span>
<span class="t" style="left:1527.1px;width:240px;text-align:center;top:996.4px;font-size:10px">280</span>
<div style="left:0px;top:941.8px;width:1658.4px;height:1.2px;background:#454545"></div>
<div style="left:0px;top:1010.4px;width:1658.4px;height:1.2px;background:#4f4f4f"></div>
<div class="m" style="left:10.8px;top:1015.7px;width:29.5px;height:19.2px;"></div>
<svg style="left:14.2px;top:1018.1px;" width="15.4" height="15.4" viewBox="0 0 16 16"><circle cx="8" cy="8" r="6" fill="#f0f0f0"/><path d="M8 4 V8 L11 10" stroke="#333" stroke-width="1.4" fill="none"/></svg>
<svg style="left:31.4px;top:1018.3px;" width="7.2" height="13.9" viewBox="0 0 7.2 14"><path d="M0.6 5.6 L3.6 1.4 L6.6 5.6 Z M0.6 8.4 L3.6 12.6 L6.6 8.4 Z" fill="#fff"/></svg>
<span class="t" style="left:53.8px;top:1018.5px;font-size:10px">Vue</span>
<span class="t" style="left:92.2px;top:1018.5px;font-size:10px">Marqueur</span>
<span class="t" style="left:159.4px;top:1018.5px;font-size:10px">Frame</span>
<span class="t" style="left:211.7px;top:1018.5px;font-size:10px">Lecture</span>
<div class="b rl" style="left:265.4px;top:1015.7px;width:18.2px;height:19.2px;"></div>
<svg style="left:267.4px;top:1018.6px;" width="14.4" height="14.4" viewBox="0 0 16 16"><circle cx="8" cy="8" r="5.6" fill="#f2b24a"/><path d="M8 4.4 V8 L10.6 9.6" stroke="#fff" stroke-width="1.5" fill="none"/></svg>
<div class="b rr nl" style="left:283.7px;top:1015.7px;width:18.2px;height:19.2px;"></div>
<svg style="left:285.6px;top:1018.6px;" width="14.4" height="14.4" viewBox="0 0 16 16"><rect x="3" y="7" width="10" height="7" fill="#f3f3f3"/><path d="M5 7 V5 a3 3 0 0 1 6 0 V7" stroke="#f3f3f3" stroke-width="1.6" fill="none"/></svg>
<div class="num rl" style="left:310.6px;top:1015.7px;width:120px;height:19.2px;"></div>
<svg style="left:313.9px;top:1022.4px;" width="3.8" height="5.8" viewBox="0 0 3.84 5.76"><path d="M3.4 0.4 L0.6 2.9 L3.4 5.4 Z" fill="#5a5a5a"/></svg>
<svg style="left:423.4px;top:1022.4px;" width="3.8" height="5.8" viewBox="0 0 3.84 5.76"><path d="M0.4 0.4 L3.2 2.9 L0.4 5.4 Z" fill="#5a5a5a"/></svg>
<span class="t" style="left:323.5px;top:1018.5px;font-size:10px">Début:</span>
<span class="t" style="right:1502.9px;top:1018.5px;font-size:10px">1</span>
<div class="num rr nl" style="left:430.6px;top:1015.7px;width:109.4px;height:19.2px;"></div>
<svg style="left:433.9px;top:1022.4px;" width="3.8" height="5.8" viewBox="0 0 3.84 5.76"><path d="M3.4 0.4 L0.6 2.9 L3.4 5.4 Z" fill="#5a5a5a"/></svg>
<svg style="left:532.8px;top:1022.4px;" width="3.8" height="5.8" viewBox="0 0 3.84 5.76"><path d="M0.4 0.4 L3.2 2.9 L0.4 5.4 Z" fill="#5a5a5a"/></svg>
<span class="t" style="left:443.5px;top:1018.5px;font-size:10px">Fin:</span>
<span class="t" style="right:1393.4px;top:1018.5px;font-size:10px">250</span>
<div class="num" style="left:547.7px;top:1015.7px;width:87.4px;height:19.2px;"></div>
<svg style="left:551px;top:1022.4px;" width="3.8" height="5.8" viewBox="0 0 3.84 5.76"><path d="M3.4 0.4 L0.6 2.9 L3.4 5.4 Z" fill="#5a5a5a"/></svg>
<svg style="left:627.8px;top:1022.4px;" width="3.8" height="5.8" viewBox="0 0 3.84 5.76"><path d="M0.4 0.4 L3.2 2.9 L0.4 5.4 Z" fill="#5a5a5a"/></svg>
<span class="t" style="right:1298.4px;top:1018.5px;font-size:10px">1</span>
<div class="b rl" style="left:656.2px;top:1015.7px;width:19.7px;height:19.2px;"></div>
<svg style="left:659px;top:1018.6px;" width="14.4" height="14.4" viewBox="0 0 16 16"><path d="M3 3 V13 M13 3 L8 8 L13 13 Z M8.6 3 L3.6 8 L8.6 13 Z" fill="#222" stroke="#222" stroke-width="1.2"/></svg>
<div class="b rn nl" style="left:675.8px;top:1015.7px;width:19.7px;height:19.2px;"></div>
<svg style="left:678.7px;top:1018.6px;" width="14.4" height="14.4" viewBox="0 0 16 16"><path d="M3 3 V13" stroke="#222" stroke-width="1.6"/><path d="M12.6 3 L5 8 L12.6 13 Z" fill="#222"/><rect x="9" y="6" width="3" height="4" fill="#ddd"/></svg>
<div class="b rn nl" style="left:695.5px;top:1015.7px;width:19.7px;height:19.2px;"></div>
<svg style="left:698.4px;top:1018.6px;" width="14.4" height="14.4" viewBox="0 0 16 16"><path d="M12 3 L4 8 L12 13 Z" fill="#f4f4f4" stroke="#222" stroke-width="1"/></svg>
<div class="b rn nl" style="left:715.2px;top:1015.7px;width:19.7px;height:19.2px;"></div>
<svg style="left:718.1px;top:1018.6px;" width="14.4" height="14.4" viewBox="0 0 16 16"><path d="M4 3 L12 8 L4 13 Z" fill="#f4f4f4" stroke="#222" stroke-width="1"/></svg>
<div class="b rn nl" style="left:734.9px;top:1015.7px;width:19.7px;height:19.2px;"></div>
<svg style="left:737.8px;top:1018.6px;" width="14.4" height="14.4" viewBox="0 0 16 16"><path d="M13 3 V13" stroke="#222" stroke-width="1.6"/><path d="M3.4 3 L11 8 L3.4 13 Z" fill="#222"/><rect x="4" y="6" width="3" height="4" fill="#ddd"/></svg>
<div class="b rr nl" style="left:754.6px;top:1015.7px;width:19.7px;height:19.2px;"></div>
<svg style="left:757.4px;top:1018.6px;" width="14.4" height="14.4" viewBox="0 0 16 16"><path d="M13 3 V13 M3 3 L8 8 L3 13 Z M7.4 3 L12.4 8 L7.4 13 Z" fill="#222" stroke="#222" stroke-width="1.2"/></svg>
<div class="m" style="left:779px;top:1015.7px;width:130.6px;height:19.2px;"></div>
<span class="t w" style="left:786.7px;top:1018.5px;font-size:10px">Pas de synchro</span>
<svg style="left:897.4px;top:1018.3px;" width="7.2" height="13.9" viewBox="0 0 7.2 14"><path d="M0.6 5.6 L3.6 1.4 L6.6 5.6 Z M0.6 8.4 L3.6 12.6 L6.6 8.4 Z" fill="#fff"/></svg>
<div class="b" style="left:926.4px;top:1015.7px;width:19.7px;height:19.2px;"></div>
<div style="left:931.7px;top:1021px;width:9.1px;height:9.1px;background:#e8603c;border-radius:50%"></div>
<div class="m rl" style="left:952.8px;top:1015.7px;width:9.6px;height:19.2px;"></div>
<div class="m rr nl" style="left:962.4px;top:1015.7px;width:19.2px;height:19.2px;"></div>
<svg style="left:954.2px;top:1019px;" width="14.4" height="14.4" viewBox="0 0 16 16"><path d="M2 6 H8 V3 L14 8 L8 13 V10 H2 Z" fill="#f0d020"/></svg>
<svg style="left:972.2px;top:1018.3px;" width="7.2" height="13.9" viewBox="0 0 7.2 14"><path d="M0.6 5.6 L3.6 1.4 L6.6 5.6 Z M0.6 8.4 L3.6 12.6 L6.6 8.4 Z" fill="#fff"/></svg>
<div class="tf" style="left:992.6px;top:1015.7px;width:129.1px;height:19.2px;"></div>
<svg style="left:996px;top:1018.6px;" width="14.4" height="14.4" viewBox="0 0 16 16"><path d="M3 3 H7 V7 H3 Z M7 7 L12 12" stroke="#ddd" stroke-width="1.3" fill="none"/></svg>
<div class="b rl" style="left:1124.2px;top:1015.7px;width:18.2px;height:19.2px;"></div>
<svg style="left:1126.1px;top:1018.6px;" width="14.4" height="14.4" viewBox="0 0 16 16"><path d="M3 13 L13 3" stroke="#ddd" stroke-width="1.6"/></svg>
<div class="b rr nl" style="left:1142.4px;top:1015.7px;width:18.2px;height:19.2px;"></div>
<svg style="left:1144.3px;top:1018.6px;" width="14.4" height="14.4" viewBox="0 0 16 16"><path d="M3 13 L13 3" stroke="#ddd" stroke-width="1.6"/><path d="M3 3 L13 13" stroke="#e03030" stroke-width="1.4"/></svg>
<div style="left:1663.2px;top:57.6px;width:2.6px;height:981.6px;background:#2e2e2e"></div>
<div style="left:1647.4px;top:58.6px;width:13.9px;height:860.2px;background:rgba(0,0,0,.05)"></div>
<div style="left:1648.3px;top:65.5px;width:10.8px;height:590.4px;background:linear-gradient(90deg,#9c9c9c,#8e8e8e);border:1px solid #5e5e5e;border-radius:6px"></div>
<svg style="left:1496.2px;top:66.2px;" width="7.7" height="7.7" viewBox="0 0 9 9"><path d="M0 1.5 L9 1.5 L4.5 8 Z" fill="#1a1a1a"/></svg>
<span class="t" style="left:1509.6px;top:63.3px;font-size:11px">Transformer</span>
<span class="t" style="left:1500px;top:94.0px;font-size:10px">Position:</span>
<div class="num rt" style="left:1492.8px;top:112.8px;width:109px;height:19.2px;"></div>
<svg style="left:1496.2px;top:119.5px;" width="3.8" height="5.8" viewBox="0 0 3.84 5.76"><path d="M3.4 0.4 L0.6 2.9 L3.4 5.4 Z" fill="#5a5a5a"/></svg>
<svg style="left:1594.6px;top:119.5px;" width="3.8" height="5.8" viewBox="0 0 3.84 5.76"><path d="M0.4 0.4 L3.2 2.9 L0.4 5.4 Z" fill="#5a5a5a"/></svg>
<span class="t" style="left:1505.8px;top:115.6px;font-size:10px">X:</span>
<span class="t" style="right:331.7px;top:115.6px;font-size:10px">-108.69021</span>
<div class="b rt" style="left:1612.8px;top:112.8px;width:25px;height:19.2px;"></div>
<svg style="left:1618.6px;top:115.9px;" width="13.4" height="13.4" viewBox="0 0 16 16"><rect x="4" y="7.6" width="9" height="6.4" fill="#f4f4f4"/><path d="M5.4 7.6 V5.4 a2.6 2.6 0 0 0 -5.2 0 V6.4" transform="translate(1.6,0)" stroke="#f4f4f4" stroke-width="1.5" fill="none"/></svg>
<div class="num rn nt" style="left:1492.8px;top:132px;width:109px;height:19.2px;"></div>
<svg style="left:1496.2px;top:138.7px;" width="3.8" height="5.8" viewBox="0 0 3.84 5.76"><path d="M3.4 0.4 L0.6 2.9 L3.4 5.4 Z" fill="#5a5a5a"/></svg>
<svg style="left:1594.6px;top:138.7px;" width="3.8" height="5.8" viewBox="0 0 3.84 5.76"><path d="M0.4 0.4 L3.2 2.9 L0.4 5.4 Z" fill="#5a5a5a"/></svg>
<span class="t" style="left:1505.8px;top:134.8px;font-size:10px">Y:</span>
<span class="t" style="right:331.7px;top:134.8px;font-size:10px">97.86049</span>
<div class="b rn nt" style="left:1612.8px;top:132px;width:25px;height:19.2px;"></div>
<svg style="left:1618.6px;top:135.1px;" width="13.4" height="13.4" viewBox="0 0 16 16"><rect x="4" y="7.6" width="9" height="6.4" fill="#f4f4f4"/><path d="M5.4 7.6 V5.4 a2.6 2.6 0 0 0 -5.2 0 V6.4" transform="translate(1.6,0)" stroke="#f4f4f4" stroke-width="1.5" fill="none"/></svg>
<div class="num rb nt" style="left:1492.8px;top:151.2px;width:109px;height:19.2px;"></div>
<svg style="left:1496.2px;top:157.9px;" width="3.8" height="5.8" viewBox="0 0 3.84 5.76"><path d="M3.4 0.4 L0.6 2.9 L3.4 5.4 Z" fill="#5a5a5a"/></svg>
<svg style="left:1594.6px;top:157.9px;" width="3.8" height="5.8" viewBox="0 0 3.84 5.76"><path d="M0.4 0.4 L3.2 2.9 L0.4 5.4 Z" fill="#5a5a5a"/></svg>
<span class="t" style="left:1505.8px;top:154.0px;font-size:10px">Z:</span>
<span class="t" style="right:331.7px;top:154.0px;font-size:10px">-116.32077</span>
<div class="b rb nt" style="left:1612.8px;top:151.2px;width:25px;height:19.2px;"></div>
<svg style="left:1618.6px;top:154.3px;" width="13.4" height="13.4" viewBox="0 0 16 16"><rect x="4" y="7.6" width="9" height="6.4" fill="#f4f4f4"/><path d="M5.4 7.6 V5.4 a2.6 2.6 0 0 0 -5.2 0 V6.4" transform="translate(1.6,0)" stroke="#f4f4f4" stroke-width="1.5" fill="none"/></svg>
<span class="t" style="left:1500px;top:176.6px;font-size:10px">Rotation:</span>
<div class="num rt" style="left:1492.8px;top:193.7px;width:109px;height:19.2px;"></div>
<svg style="left:1496.2px;top:200.4px;" width="3.8" height="5.8" viewBox="0 0 3.84 5.76"><path d="M3.4 0.4 L0.6 2.9 L3.4 5.4 Z" fill="#5a5a5a"/></svg>
<svg style="left:1594.6px;top:200.4px;" width="3.8" height="5.8" viewBox="0 0 3.84 5.76"><path d="M0.4 0.4 L3.2 2.9 L0.4 5.4 Z" fill="#5a5a5a"/></svg>
<span class="t" style="left:1505.8px;top:196.5px;font-size:10px">X:</span>
<span class="t" style="right:331.7px;top:196.5px;font-size:10px">0°</span>
<div class="b rt" style="left:1612.8px;top:193.7px;width:25px;height:19.2px;"></div>
<svg style="left:1618.6px;top:196.8px;" width="13.4" height="13.4" viewBox="0 0 16 16"><rect x="4" y="7.6" width="9" height="6.4" fill="#f4f4f4"/><path d="M5.4 7.6 V5.4 a2.6 2.6 0 0 0 -5.2 0 V6.4" transform="translate(1.6,0)" stroke="#f4f4f4" stroke-width="1.5" fill="none"/></svg>
<div class="num rn nt" style="left:1492.8px;top:212.9px;width:109px;height:19.2px;"></div>
<svg style="left:1496.2px;top:219.6px;" width="3.8" height="5.8" viewBox="0 0 3.84 5.76"><path d="M3.4 0.4 L0.6 2.9 L3.4 5.4 Z" fill="#5a5a5a"/></svg>
<svg style="left:1594.6px;top:219.6px;" width="3.8" height="5.8" viewBox="0 0 3.84 5.76"><path d="M0.4 0.4 L3.2 2.9 L0.4 5.4 Z" fill="#5a5a5a"/></svg>
<span class="t" style="left:1505.8px;top:215.7px;font-size:10px">Y:</span>
<span class="t" style="right:331.7px;top:215.7px;font-size:10px">0°</span>
<div class="b rn nt" style="left:1612.8px;top:212.9px;width:25px;height:19.2px;"></div>
<svg style="left:1618.6px;top:216px;" width="13.4" height="13.4" viewBox="0 0 16 16"><rect x="4" y="7.6" width="9" height="6.4" fill="#f4f4f4"/><path d="M5.4 7.6 V5.4 a2.6 2.6 0 0 0 -5.2 0 V6.4" transform="translate(1.6,0)" stroke="#f4f4f4" stroke-width="1.5" fill="none"/></svg>
<div class="num rb nt" style="left:1492.8px;top:232.1px;width:109px;height:19.2px;"></div>
<svg style="left:1496.2px;top:238.8px;" width="3.8" height="5.8" viewBox="0 0 3.84 5.76"><path d="M3.4 0.4 L0.6 2.9 L3.4 5.4 Z" fill="#5a5a5a"/></svg>
<svg style="left:1594.6px;top:238.8px;" width="3.8" height="5.8" viewBox="0 0 3.84 5.76"><path d="M0.4 0.4 L3.2 2.9 L0.4 5.4 Z" fill="#5a5a5a"/></svg>
<span class="t" style="left:1505.8px;top:234.9px;font-size:10px">Z:</span>
<span class="t" style="right:331.7px;top:234.9px;font-size:10px">0°</span>
<div class="b rb nt" style="left:1612.8px;top:232.1px;width:25px;height:19.2px;"></div>
<svg style="left:1618.6px;top:235.2px;" width="13.4" height="13.4" viewBox="0 0 16 16"><rect x="4" y="7.6" width="9" height="6.4" fill="#f4f4f4"/><path d="M5.4 7.6 V5.4 a2.6 2.6 0 0 0 -5.2 0 V6.4" transform="translate(1.6,0)" stroke="#f4f4f4" stroke-width="1.5" fill="none"/></svg>
<div class="m" style="left:1491.4px;top:254.4px;width:146.9px;height:20.2px;"></div>
<span class="t w" style="left:1499px;top:257.7px;font-size:10px">Euler XYZ</span>
<svg style="left:1626px;top:257.5px;" width="7.2" height="13.9" viewBox="0 0 7.2 14"><path d="M0.6 5.6 L3.6 1.4 L6.6 5.6 Z M0.6 8.4 L3.6 12.6 L6.6 8.4 Z" fill="#fff"/></svg>
<span class="t" style="left:1500px;top:281.7px;font-size:10px">Taille/échelle:</span>
<div class="num rt" style="left:1492.8px;top:298.6px;width:109px;height:19.2px;"></div>
<svg style="left:1496.2px;top:305.3px;" width="3.8" height="5.8" viewBox="0 0 3.84 5.76"><path d="M3.4 0.4 L0.6 2.9 L3.4 5.4 Z" fill="#5a5a5a"/></svg>
<svg style="left:1594.6px;top:305.3px;" width="3.8" height="5.8" viewBox="0 0 3.84 5.76"><path d="M0.4 0.4 L3.2 2.9 L0.4 5.4 Z" fill="#5a5a5a"/></svg>
<span class="t" style="left:1505.8px;top:301.4px;font-size:10px">X:</span>
<span class="t" style="right:331.7px;top:301.4px;font-size:10px">1.000</span>
<div class="b rt" style="left:1612.8px;top:298.6px;width:25px;height:19.2px;"></div>
<svg style="left:1618.6px;top:301.7px;" width="13.4" height="13.4" viewBox="0 0 16 16"><rect x="4" y="7.6" width="9" height="6.4" fill="#f4f4f4"/><path d="M5.4 7.6 V5.4 a2.6 2.6 0 0 0 -5.2 0 V6.4" transform="translate(1.6,0)" stroke="#f4f4f4" stroke-width="1.5" fill="none"/></svg>
<div class="num rn nt" style="left:1492.8px;top:317.8px;width:109px;height:19.2px;"></div>
<svg style="left:1496.2px;top:324.5px;" width="3.8" height="5.8" viewBox="0 0 3.84 5.76"><path d="M3.4 0.4 L0.6 2.9 L3.4 5.4 Z" fill="#5a5a5a"/></svg>
<svg style="left:1594.6px;top:324.5px;" width="3.8" height="5.8" viewBox="0 0 3.84 5.76"><path d="M0.4 0.4 L3.2 2.9 L0.4 5.4 Z" fill="#5a5a5a"/></svg>
<span class="t" style="left:1505.8px;top:320.6px;font-size:10px">Y:</span>
<span class="t" style="right:331.7px;top:320.6px;font-size:10px">1.000</span>
<div class="b rn nt" style="left:1612.8px;top:317.8px;width:25px;height:19.2px;"></div>
<svg style="left:1618.6px;top:320.9px;" width="13.4" height="13.4" viewBox="0 0 16 16"><rect x="4" y="7.6" width="9" height="6.4" fill="#f4f4f4"/><path d="M5.4 7.6 V5.4 a2.6 2.6 0 0 0 -5.2 0 V6.4" transform="translate(1.6,0)" stroke="#f4f4f4" stroke-width="1.5" fill="none"/></svg>
<div class="num rb nt" style="left:1492.8px;top:337px;width:109px;height:19.2px;"></div>
<svg style="left:1496.2px;top:343.7px;" width="3.8" height="5.8" viewBox="0 0 3.84 5.76"><path d="M3.4 0.4 L0.6 2.9 L3.4 5.4 Z" fill="#5a5a5a"/></svg>
<svg style="left:1594.6px;top:343.7px;" width="3.8" height="5.8" viewBox="0 0 3.84 5.76"><path d="M0.4 0.4 L3.2 2.9 L0.4 5.4 Z" fill="#5a5a5a"/></svg>
<span class="t" style="left:1505.8px;top:339.8px;font-size:10px">Z:</span>
<span class="t" style="right:331.7px;top:339.8px;font-size:10px">1.000</span>
<div class="b rb nt" style="left:1612.8px;top:337px;width:25px;height:19.2px;"></div>
<svg style="left:1618.6px;top:340.1px;" width="13.4" height="13.4" viewBox="0 0 16 16"><rect x="4" y="7.6" width="9" height="6.4" fill="#f4f4f4"/><path d="M5.4 7.6 V5.4 a2.6 2.6 0 0 0 -5.2 0 V6.4" transform="translate(1.6,0)" stroke="#f4f4f4" stroke-width="1.5" fill="none"/></svg>
<span class="t" style="left:1500px;top:363.8px;font-size:10px">Dimensions:</span>
<div class="num rt" style="left:1492.8px;top:381.6px;width:145.4px;height:19.2px;"></div>
<svg style="left:1496.2px;top:388.3px;" width="3.8" height="5.8" viewBox="0 0 3.84 5.76"><path d="M3.4 0.4 L0.6 2.9 L3.4 5.4 Z" fill="#5a5a5a"/></svg>
<svg style="left:1631px;top:388.3px;" width="3.8" height="5.8" viewBox="0 0 3.84 5.76"><path d="M0.4 0.4 L3.2 2.9 L0.4 5.4 Z" fill="#5a5a5a"/></svg>
<span class="t" style="left:1505.8px;top:384.4px;font-size:10px">X:</span>
<span class="t" style="right:295.2px;top:384.4px;font-size:10px">2.000</span>
<div class="num rn nt" style="left:1492.8px;top:400.8px;width:145.4px;height:19.2px;"></div>
<svg style="left:1496.2px;top:407.5px;" width="3.8" height="5.8" viewBox="0 0 3.84 5.76"><path d="M3.4 0.4 L0.6 2.9 L3.4 5.4 Z" fill="#5a5a5a"/></svg>
<svg style="left:1631px;top:407.5px;" width="3.8" height="5.8" viewBox="0 0 3.84 5.76"><path d="M0.4 0.4 L3.2 2.9 L0.4 5.4 Z" fill="#5a5a5a"/></svg>
<span class="t" style="left:1505.8px;top:403.6px;font-size:10px">Y:</span>
<span class="t" style="right:295.2px;top:403.6px;font-size:10px">100.000</span>
<div class="num rb nt" style="left:1492.8px;top:420px;width:145.4px;height:19.2px;"></div>
<svg style="left:1496.2px;top:426.7px;" width="3.8" height="5.8" viewBox="0 0 3.84 5.76"><path d="M3.4 0.4 L0.6 2.9 L3.4 5.4 Z" fill="#5a5a5a"/></svg>
<svg style="left:1631px;top:426.7px;" width="3.8" height="5.8" viewBox="0 0 3.84 5.76"><path d="M0.4 0.4 L3.2 2.9 L0.4 5.4 Z" fill="#5a5a5a"/></svg>
<span class="t" style="left:1505.8px;top:422.8px;font-size:10px">Z:</span>
<span class="t" style="right:295.2px;top:422.8px;font-size:10px">80.000</span>
<div style="left:1483.2px;top:445.2px;width:165.6px;height:1.1px;background:#5c5c5c"></div>
<svg style="left:1496.2px;top:457.4px;" width="7.7" height="7.7" viewBox="0 0 9 9"><path d="M0 1.5 L9 1.5 L4.5 8 Z" fill="#1a1a1a"/></svg>
<div class="ck" style="left:1508.6px;top:454.3px;width:13.9px;height:13.9px;"></div>
<svg style="left:1509.1px;top:451px;" width="16.8" height="16.8" viewBox="0 0 16.8 16.8"><path d="M3.4 8.4 L6.6 12 L13.6 2.8" stroke="#fff" stroke-width="2.3" fill="none"/></svg>
<span class="t" style="left:1528.8px;top:454.5px;font-size:11px">Calques de crayon gr</span>
<div class="sel rl" style="left:1491.4px;top:481.2px;width:72px;height:19.2px;"></div>
<span class="t" style="left:1407.4px;width:240px;text-align:center;top:484.0px;font-size:10px">Scène</span>
<div class="m rr nl" style="left:1563.4px;top:481.2px;width:74.9px;height:19.2px;"></div>
<span class="t w" style="left:1480.8px;width:240px;text-align:center;top:484.0px;font-size:10px">Objet</span>
<div class="m rl" style="left:1491.4px;top:506.9px;width:28.8px;height:19.2px;"></div>
<svg style="left:1493.8px;top:509.5px;" width="13.9" height="13.9" viewBox="0 0 16 16"><path d="M2.4 13.6 L3.4 10 L11 2.4 L13.6 5 L6 12.6 Z" fill="#f0c060" stroke="#5a3a10" stroke-width="0.8"/></svg>
<svg style="left:1510.3px;top:509.5px;" width="7.2" height="13.9" viewBox="0 0 7.2 14"><path d="M0.6 5.6 L3.6 1.4 L6.6 5.6 Z M0.6 8.4 L3.6 12.6 L6.6 8.4 Z" fill="#fff"/></svg>
<div class="b rr nl" style="left:1520.2px;top:506.9px;width:118.1px;height:19.2px;"></div>
<svg style="left:1524px;top:510px;" width="13" height="13" viewBox="0 0 16 16"><path d="M8 2.5 V13.5 M2.5 8 H13.5" stroke="#e8e8e8" stroke-width="2"/></svg>
<span class="t" style="left:1466.4px;width:240px;text-align:center;top:509.7px;font-size:10px">Nouveau</span>
<div class="b" style="left:1491.4px;top:532.1px;width:146.9px;height:19.2px;"></div>
<span class="t" style="left:1444.8px;width:240px;text-align:center;top:534.9px;font-size:10px">Nouveau calque</span>
<div style="left:1483.2px;top:559.7px;width:165.6px;height:1.1px;background:#5c5c5c"></div>
<svg style="left:1496.2px;top:567.4px;" width="7.7" height="7.7" viewBox="0 0 9 9"><path d="M0 1.5 L9 1.5 L4.5 8 Z" fill="#1a1a1a"/></svg>
<span class="t" style="left:1509.6px;top:564.4px;font-size:11px">Vue</span>
<div class="num" style="left:1492.8px;top:592.1px;width:145.4px;height:19.2px;"></div>
<svg style="left:1496.2px;top:598.8px;" width="3.8" height="5.8" viewBox="0 0 3.84 5.76"><path d="M3.4 0.4 L0.6 2.9 L3.4 5.4 Z" fill="#5a5a5a"/></svg>
<svg style="left:1631px;top:598.8px;" width="3.8" height="5.8" viewBox="0 0 3.84 5.76"><path d="M0.4 0.4 L3.2 2.9 L0.4 5.4 Z" fill="#5a5a5a"/></svg>
<span class="t" style="left:1505.8px;top:594.9px;font-size:10px">Focale:</span>
<span class="t" style="right:295.2px;top:594.9px;font-size:10px">35.000</span>
<span class="t" style="left:1500px;top:617.2px;font-size:10px">Verrouiller à l'objet:</span>
<div class="tf" style="left:1491.4px;top:636px;width:146.9px;height:19.2px;"></div>
<svg style="left:1494.2px;top:638.9px;" width="13.9" height="13.9" viewBox="0 0 16 16"><path d="M3 4.6 L9 2.4 L13.4 4.4 L13.4 11.6 L7.6 14 L3 11.6 Z" fill="#f0a24a"/><path d="M3 4.6 L7.6 6.8 L13.4 4.4 M7.6 6.8 V14" stroke="#fbe0b8" stroke-width="1.1" fill="none"/></svg>
<svg style="left:1624.3px;top:639.4px;" width="12" height="12" viewBox="0 0 16 16"><path d="M3 13 L6 12 L13 4 L11 2.4 L4 10 Z" fill="#333"/></svg>
<div class="ck" style="left:1493.8px;top:662.6px;width:13.2px;height:13.2px;"></div>
<span class="t" style="left:1515.8px;top:662.3px;font-size:10px">Verrouiller au curseur</span>
<div class="ck" style="left:1493.8px;top:686.6px;width:13.2px;height:13.2px;"></div>
<span class="t" style="left:1515.8px;top:686.3px;font-size:10px">Verrouiller caméra à l...</span>
<span class="t" style="left:1500px;top:712.2px;font-size:10px">Tronquer:</span>
<div class="num rt" style="left:1492.8px;top:730.1px;width:145.4px;height:19.2px;"></div>
<svg style="left:1496.2px;top:736.8px;" width="3.8" height="5.8" viewBox="0 0 3.84 5.76"><path d="M3.4 0.4 L0.6 2.9 L3.4 5.4 Z" fill="#5a5a5a"/></svg>
<svg style="left:1631px;top:736.8px;" width="3.8" height="5.8" viewBox="0 0 3.84 5.76"><path d="M0.4 0.4 L3.2 2.9 L0.4 5.4 Z" fill="#5a5a5a"/></svg>
<span class="t" style="left:1505.8px;top:732.9px;font-size:10px">Début:</span>
<span class="t" style="right:295.2px;top:732.9px;font-size:10px">0.100</span>
<div class="num rb nt" style="left:1492.8px;top:749.3px;width:145.4px;height:19.2px;"></div>
<svg style="left:1496.2px;top:756px;" width="3.8" height="5.8" viewBox="0 0 3.84 5.76"><path d="M3.4 0.4 L0.6 2.9 L3.4 5.4 Z" fill="#5a5a5a"/></svg>
<svg style="left:1631px;top:756px;" width="3.8" height="5.8" viewBox="0 0 3.84 5.76"><path d="M0.4 0.4 L3.2 2.9 L0.4 5.4 Z" fill="#5a5a5a"/></svg>
<span class="t" style="left:1505.8px;top:752.1px;font-size:10px">Fin:</span>
<span class="t" style="right:295.2px;top:752.1px;font-size:10px">1000.000</span>
<span class="t g" style="left:1500px;top:771.8px;font-size:10px">Caméra locale:</span>
<div class="tf dis" style="left:1491.4px;top:788.9px;width:146.9px;height:19.2px;"></div>
<svg style="left:1494.2px;top:791.8px;" width="13.9" height="13.9" viewBox="0 0 16 16"><path d="M3 4.6 L9 2.4 L13.4 4.4 L13.4 11.6 L7.6 14 L3 11.6 Z" fill="#e0b070"/></svg>
<span class="t g" style="left:1512px;top:791.7px;font-size:10px;color:#666">Camera</span>
<svg style="left:1623.4px;top:792.7px;" width="12" height="12" viewBox="0 0 16 16"><path d="M3.5 3.5 L12.5 12.5 M12.5 3.5 L3.5 12.5" stroke="#777" stroke-width="1.6"/></svg>
<div class="ck" style="left:1493.8px;top:818.6px;width:13.2px;height:13.2px;"></div>
<span class="t" style="left:1515.8px;top:818.3px;font-size:10px">Rendu partiel</span>
<div style="left:1483.2px;top:841.4px;width:165.6px;height:1.1px;background:#5c5c5c"></div>
<svg style="left:1496.2px;top:850.1px;" width="7.7" height="7.7" viewBox="0 0 9 9"><path d="M0 1.5 L9 1.5 L4.5 8 Z" fill="#1a1a1a"/></svg>
<span class="t" style="left:1509.6px;top:847.1px;font-size:11px">Curseur 3D</span>
<span class="t" style="left:1500px;top:878.3px;font-size:10px">Position:</span>
<div class="num rt" style="left:1492.8px;top:895.2px;width:145.4px;height:19.2px;"></div>
<svg style="left:1496.2px;top:901.9px;" width="3.8" height="5.8" viewBox="0 0 3.84 5.76"><path d="M3.4 0.4 L0.6 2.9 L3.4 5.4 Z" fill="#5a5a5a"/></svg>
<svg style="left:1631px;top:901.9px;" width="3.8" height="5.8" viewBox="0 0 3.84 5.76"><path d="M0.4 0.4 L3.2 2.9 L0.4 5.4 Z" fill="#5a5a5a"/></svg>
<span class="t" style="left:1505.8px;top:898.0px;font-size:10px">X:</span>
<span class="t" style="right:295.2px;top:898.0px;font-size:10px">-1.01744</span>
<div class="m" style="left:1674.7px;top:61.4px;width:29.8px;height:19.2px;"></div>
<svg style="left:1677.6px;top:64.1px;" width="14.9" height="14.9" viewBox="0 0 16 16"><path d="M2 3.5 H9 M4.6 7.8 H13 M4.6 12 H13" stroke="#f2f2f2" stroke-width="2"/><path d="M2.6 4 V12 H4" stroke="#cfcfcf" stroke-width="1" fill="none"/></svg>
<svg style="left:1695.6px;top:64.1px;" width="7.2" height="13.9" viewBox="0 0 7.2 14"><path d="M0.6 5.6 L3.6 1.4 L6.6 5.6 Z M0.6 8.4 L3.6 12.6 L6.6 8.4 Z" fill="#fff"/></svg>
<span class="t" style="left:1716.5px;top:64.2px;font-size:10px">Vue</span>
<span class="t" style="left:1756.3px;top:64.2px;font-size:10px">Chercher</span>
<div class="m" style="left:1814.4px;top:61.4px;width:115.2px;height:19.2px;"></div>
<span class="t w" style="left:1822.6px;top:64.2px;font-size:10px">Toutes les scènes</span>
<div style="left:1665.6px;top:85.4px;width:254.4px;height:1.1px;background:#5a5a5a"></div>
<div style="left:1684.8px;top:86.2px;width:157px;height:19.2px;background:#8797ab"></div>
<div style="left:1665.6px;top:105.6px;width:235.2px;height:20.2px;background:rgba(255,255,255,.025)"></div>
<div style="left:1665.6px;top:145.9px;width:235.2px;height:20.2px;background:rgba(255,255,255,.025)"></div>
<div style="left:1665.6px;top:186.2px;width:235.2px;height:20.2px;background:rgba(255,255,255,.025)"></div>
<svg style="left:1669.4px;top:91.7px;" width="7.7" height="7.7" viewBox="0 0 7.6 7.6"><rect x="0.6" y="0.6" width="6.4" height="6.4" fill="none" stroke="#ddd" stroke-width="0.9"/><path d="M2 3.8 H5.6 M3.8 2 V5.6" stroke="#eee" stroke-width="0.9"/></svg>
<svg style="left:1686.7px;top:88.1px;" width="14.9" height="14.9" viewBox="0 0 16 16"><circle cx="8" cy="8" r="6.2" fill="#e8e8e8"/><circle cx="6" cy="6" r="2.2" fill="#7da0d8"/><path d="M3.4 11 L7 8 L9.6 10.4 L12.4 9 " stroke="#6a6a6a" stroke-width="1.2" fill="none"/></svg>
<span class="t" style="left:1706.4px;top:88.7px;font-size:10px">Scene</span>
<svg style="left:1707.4px;top:108.2px;" width="14.9" height="14.9" viewBox="0 0 16 16"><rect x="3" y="2.4" width="8" height="10" fill="#f4f4f4" stroke="#555" stroke-width="0.8"/><rect x="5.4" y="4.6" width="8" height="10" fill="#dcdcdc" stroke="#555" stroke-width="0.8"/></svg>
<span class="t" style="left:1726.1px;top:108.9px;font-size:10px">Calques de rendu</span>
<span class="t" style="left:1819.2px;top:108.9px;font-size:10px;color:#333">|</span>
<svg style="left:1829.3px;top:109px;" width="13.4" height="13.4" viewBox="0 0 16 16"><circle cx="8" cy="8" r="6.2" fill="#e8e8e8"/><circle cx="6" cy="6" r="2.2" fill="#7da0d8"/><path d="M3.4 11 L7 8 L9.6 10.4 L12.4 9 " stroke="#6a6a6a" stroke-width="1.2" fill="none"/></svg>
<svg style="left:1706.9px;top:128.4px;" width="14.9" height="14.9" viewBox="0 0 16 16"><circle cx="8" cy="8" r="6" fill="#5d8fd6"/><path d="M3 6 C6 4 9 9 13 5" stroke="#e8f0ff" stroke-width="1.6" fill="none"/><path d="M4 11 C7 9 10 13 13 10" stroke="#e8f0ff" stroke-width="1.2" fill="none"/></svg>
<span class="t" style="left:1726.6px;top:129.0px;font-size:10px">World</span>
<svg style="left:1689.6px;top:152.2px;" width="7.7" height="7.7" viewBox="0 0 7.6 7.6"><rect x="0.6" y="0.6" width="6.4" height="6.4" fill="none" stroke="#ddd" stroke-width="0.9"/><path d="M2 3.8 H5.6 M3.8 2 V5.6" stroke="#eee" stroke-width="0.9"/></svg>
<svg style="left:1706.9px;top:148.6px;" width="14.9" height="14.9" viewBox="0 0 16 16"><path d="M2 5 H10 V12 H2 Z M10 7.4 L14 5 V12 L10 9.6 Z" fill="#f0a030"/><circle cx="4.4" cy="3.6" r="1.8" fill="#f6c070"/><circle cx="8.4" cy="3.6" r="1.8" fill="#f6c070"/></svg>
<span class="t" style="left:1727px;top:149.2px;font-size:10px">Camera</span>
<span class="t" style="left:1774.6px;top:149.2px;font-size:10px;color:#333">|</span>
<svg style="left:1788px;top:148.3px;opacity:0.35" width="15.4" height="15.4" viewBox="0 0 16 16"><path d="M2 5.4 H5 L6.2 3.6 H9.8 L11 5.4 H14 V12.6 H2 Z" fill="#f0f0f0"/><circle cx="8" cy="9" r="2.4" fill="#555"/></svg>
<svg style="left:1689.6px;top:172.3px;" width="7.7" height="7.7" viewBox="0 0 7.6 7.6"><rect x="0.6" y="0.6" width="6.4" height="6.4" fill="none" stroke="#ddd" stroke-width="0.9"/><path d="M2 3.8 H5.6 M3.8 2 V5.6" stroke="#eee" stroke-width="0.9"/></svg>
<svg style="left:1706.9px;top:168.7px;" width="14.9" height="14.9" viewBox="0 0 16 16"><path d="M2.5 3.5 L13.5 3.5 L8 13.5 Z" fill="none" stroke="#f0a030" stroke-width="1.8"/><circle cx="2.5" cy="3.5" r="1.5" fill="#ffe0a0"/><circle cx="13.5" cy="3.5" r="1.5" fill="#ffe0a0"/><circle cx="8" cy="13.5" r="1.5" fill="#ffe0a0"/></svg>
<span class="t" style="left:1727px;top:169.4px;font-size:10px">Cube</span>
<span class="t" style="left:1760.2px;top:169.4px;font-size:10px;color:#333">|</span>
<svg style="left:1689.6px;top:192.5px;" width="7.7" height="7.7" viewBox="0 0 7.6 7.6"><rect x="0.6" y="0.6" width="6.4" height="6.4" fill="none" stroke="#ddd" stroke-width="0.9"/><path d="M2 3.8 H5.6 M3.8 2 V5.6" stroke="#eee" stroke-width="0.9"/></svg>
<svg style="left:1706.9px;top:188.9px;" width="14.9" height="14.9" viewBox="0 0 16 16"><path d="M2.5 3.5 L13.5 3.5 L8 13.5 Z" fill="none" stroke="#f0a030" stroke-width="1.8"/><circle cx="2.5" cy="3.5" r="1.5" fill="#ffe0a0"/><circle cx="13.5" cy="3.5" r="1.5" fill="#ffe0a0"/><circle cx="8" cy="13.5" r="1.5" fill="#ffe0a0"/></svg>
<span class="t" style="left:1727px;top:189.5px;font-size:10px">Cube.001</span>
<span class="t" style="left:1786.6px;top:189.5px;font-size:10px;color:#333">|</span>
<svg style="left:1796.2px;top:189.4px;opacity:0.3" width="13.9" height="13.9" viewBox="0 0 16 16"><path d="M2.5 3.5 L13.5 3.5 L8 13.5 Z" fill="none" stroke="#f0a030" stroke-width="1.8"/><circle cx="2.5" cy="3.5" r="1.5" fill="#ffe0a0"/><circle cx="13.5" cy="3.5" r="1.5" fill="#ffe0a0"/><circle cx="8" cy="13.5" r="1.5" fill="#ffe0a0"/></svg>
<div style="left:1694.4px;top:105.6px;width:1px;height:100.8px;background:rgba(40,40,40,.45)"></div>
<svg style="left:1844.6px;top:148.8px;" width="14.4" height="14.4" viewBox="0 0 16 16"><path d="M2 8 C5 3.6 11 3.6 14 8 C11 11.6 5 11.6 2 8 Z" fill="#f2f2f2"/><circle cx="8" cy="7.8" r="2" fill="#4a4a4a"/></svg>
<svg style="left:1865.8px;top:148.8px;" width="14.4" height="14.4" viewBox="0 0 16 16"><path d="M5 2 L12 9 L8.6 9.2 L10.4 13.2 L8.6 14 L6.8 10 L5 12 Z" fill="#f4f4f4" stroke="#333" stroke-width="0.6"/></svg>
<svg style="left:1884px;top:148.8px;" width="14.4" height="14.4" viewBox="0 0 16 16"><path d="M2 5.4 H5 L6.2 3.6 H9.8 L11 5.4 H14 V12.6 H2 Z" fill="#f0f0f0"/><circle cx="8" cy="9" r="2.4" fill="#555"/></svg>
<svg style="left:1844.6px;top:169px;" width="14.4" height="14.4" viewBox="0 0 16 16"><path d="M2 8 C5 3.6 11 3.6 14 8 C11 11.6 5 11.6 2 8 Z" fill="#f2f2f2"/><circle cx="8" cy="7.8" r="2" fill="#4a4a4a"/></svg>
<svg style="left:1865.8px;top:169px;" width="14.4" height="14.4" viewBox="0 0 16 16"><path d="M5 2 L12 9 L8.6 9.2 L10.4 13.2 L8.6 14 L6.8 10 L5 12 Z" fill="#f4f4f4" stroke="#333" stroke-width="0.6"/></svg>
<svg style="left:1884px;top:169px;" width="14.4" height="14.4" viewBox="0 0 16 16"><path d="M2 5.4 H5 L6.2 3.6 H9.8 L11 5.4 H14 V12.6 H2 Z" fill="#f0f0f0"/><circle cx="8" cy="9" r="2.4" fill="#555"/></svg>
<svg style="left:1844.6px;top:189.1px;" width="14.4" height="14.4" viewBox="0 0 16 16"><path d="M2 8 C5 3.6 11 3.6 14 8 C11 11.6 5 11.6 2 8 Z" fill="#f2f2f2"/><circle cx="8" cy="7.8" r="2" fill="#4a4a4a"/></svg>
<svg style="left:1865.8px;top:189.1px;" width="14.4" height="14.4" viewBox="0 0 16 16"><path d="M5 2 L12 9 L8.6 9.2 L10.4 13.2 L8.6 14 L6.8 10 L5 12 Z" fill="#f4f4f4" stroke="#333" stroke-width="0.6"/></svg>
<svg style="left:1884px;top:189.1px;" width="14.4" height="14.4" viewBox="0 0 16 16"><path d="M2 5.4 H5 L6.2 3.6 H9.8 L11 5.4 H14 V12.6 H2 Z" fill="#f0f0f0"/><circle cx="8" cy="9" r="2.4" fill="#555"/></svg>
<div style="left:1841.8px;top:85.9px;width:1px;height:124.8px;background:rgba(0,0,0,.16)"></div>
<div style="left:1861.9px;top:85.9px;width:1px;height:124.8px;background:rgba(0,0,0,.16)"></div>
<div style="left:1880.6px;top:85.9px;width:1px;height:124.8px;background:rgba(0,0,0,.16)"></div>
<div style="left:1899.8px;top:85.9px;width:1px;height:124.8px;background:rgba(0,0,0,.16)"></div>
<div style="left:1902.2px;top:89.8px;width:11px;height:122.4px;background:#5e5e5e;border-radius:5px;opacity:.55"></div>
<div style="left:1902.7px;top:89.8px;width:10.6px;height:44.6px;background:linear-gradient(90deg,#9a9a9a,#848484);border:1px solid #3c3c3c;border-radius:5px"></div>
<div style="left:1669px;top:212.2px;width:225.6px;height:8.6px;background:#5a5a5a;border:1px solid #3c3c3c;border-radius:4px"></div>
<div style="left:1669px;top:212.2px;width:177.6px;height:8.6px;background:linear-gradient(#9c9c9c,#868686);border:1px solid #3c3c3c;border-radius:4px"></div>
<div style="left:1665.6px;top:227px;width:254.4px;height:1.9px;background:#333"></div>
<div class="m" style="left:1674.7px;top:231.8px;width:29.8px;height:19.2px;"></div>
<svg style="left:1677.6px;top:234.5px;" width="14.9" height="14.9" viewBox="0 0 16 16"><rect x="2" y="7" width="9" height="6.4" fill="#f2f2f2"/><path d="M3 7 V3.4 H8 M8 2 V5" stroke="#eee" stroke-width="1.4" fill="none"/><rect x="7" y="2" width="6" height="3.4" fill="#dadada"/></svg>
<svg style="left:1695.6px;top:234.5px;" width="7.2" height="13.9" viewBox="0 0 7.2 14"><path d="M0.6 5.6 L3.6 1.4 L6.6 5.6 Z M0.6 8.4 L3.6 12.6 L6.6 8.4 Z" fill="#fff"/></svg>
<div class="m rl" style="left:1712.6px;top:231.8px;width:20.1px;height:19.2px;"></div>
<svg style="left:1715.5px;top:234.2px;" width="14.4" height="14.4" viewBox="0 0 16 16"><path d="M2 5.4 H5 L6.2 3.6 H9.8 L11 5.4 H14 V12.6 H2 Z" fill="#f0f0f0"/><circle cx="8" cy="9" r="2.4" fill="#555"/></svg>
<div class="m rn nl" style="left:1732.8px;top:231.8px;width:20.1px;height:19.2px;"></div>
<svg style="left:1735.6px;top:234.2px;" width="14.4" height="14.4" viewBox="0 0 16 16"><rect x="3" y="2.4" width="8" height="10" fill="#f4f4f4" stroke="#555" stroke-width="0.8"/><rect x="5.4" y="4.6" width="8" height="10" fill="#dcdcdc" stroke="#555" stroke-width="0.8"/></svg>
<div class="m rn nl" style="left:1752.9px;top:231.8px;width:20.1px;height:19.2px;"></div>
<svg style="left:1755.7px;top:234.2px;opacity:0.55" width="14.4" height="14.4" viewBox="0 0 16 16"><circle cx="8" cy="8" r="6.2" fill="#e8e8e8"/><circle cx="6" cy="6" r="2.2" fill="#7da0d8"/><path d="M3.4 11 L7 8 L9.6 10.4 L12.4 9 " stroke="#6a6a6a" stroke-width="1.2" fill="none"/></svg>
<div class="m rn nl" style="left:1773px;top:231.8px;width:20.1px;height:19.2px;"></div>
<svg style="left:1775.9px;top:234.2px;opacity:0.55" width="14.4" height="14.4" viewBox="0 0 16 16"><circle cx="8" cy="8" r="6" fill="#5d8fd6"/><path d="M3 6 C6 4 9 9 13 5" stroke="#e8f0ff" stroke-width="1.6" fill="none"/><path d="M4 11 C7 9 10 13 13 10" stroke="#e8f0ff" stroke-width="1.2" fill="none"/></svg>
<div class="m rn nl" style="left:1793.1px;top:231.8px;width:20.1px;height:19.2px;"></div>
<svg style="left:1796px;top:234.2px;opacity:0.55" width="14.4" height="14.4" viewBox="0 0 16 16"><path d="M3 4.6 L9 2.4 L13.4 4.4 L13.4 11.6 L7.6 14 L3 11.6 Z" fill="#f0a24a"/><path d="M3 4.6 L7.6 6.8 L13.4 4.4 M7.6 6.8 V14" stroke="#fbe0b8" stroke-width="1.1" fill="none"/></svg>
<div class="m rn nl" style="left:1813.2px;top:231.8px;width:20.1px;height:19.2px;"></div>
<svg style="left:1816.1px;top:234.2px;opacity:0.55" width="14.4" height="14.4" viewBox="0 0 16 16"><path d="M4 10 a2.6 2.6 0 0 1 0 -4 L6 4 a2.6 2.6 0 0 1 4 0 M12 6 a2.6 2.6 0 0 1 0 4 L10 12 a2.6 2.6 0 0 1 -4 0" stroke="#c8c8c8" stroke-width="1.6" fill="none"/></svg>
<div class="m rn nl" style="left:1833.3px;top:231.8px;width:20.1px;height:19.2px;"></div>
<svg style="left:1836.2px;top:234.2px;opacity:0.55" width="14.4" height="14.4" viewBox="0 0 16 16"><path d="M3 13 L9 7" stroke="#9db4d8" stroke-width="2.2"/><path d="M9 7 a3 3 0 1 1 3 -3 L10 5.4 L10.6 6.4 Z" fill="#9db4d8"/></svg>
<div class="m rn nl" style="left:1853.4px;top:231.8px;width:20.1px;height:19.2px;"></div>
<svg style="left:1856.3px;top:234.2px;opacity:0.55" width="14.4" height="14.4" viewBox="0 0 16 16"><path d="M2.5 3.5 L13.5 3.5 L8 13.5 Z" fill="none" stroke="#f0a030" stroke-width="1.8"/><circle cx="2.5" cy="3.5" r="1.5" fill="#ffe0a0"/><circle cx="13.5" cy="3.5" r="1.5" fill="#ffe0a0"/><circle cx="8" cy="13.5" r="1.5" fill="#ffe0a0"/></svg>
<div class="m rn nl" style="left:1873.5px;top:231.8px;width:20.1px;height:19.2px;background:linear-gradient(#8a95a6,#6e7a8c)"></div>
<svg style="left:1876.2px;top:234px;" width="14.9" height="14.9" viewBox="0 0 16 16"><circle cx="8" cy="8" r="6.4" fill="#9db9e6"/><circle cx="6" cy="5.6" r="2.6" fill="#f4f8ff"/><path d="M3 11 A6.4 6.4 0 0 0 13.6 10.4 A8 8 0 0 1 3 11 Z" fill="#4a6ea8"/></svg>
<div class="m rn nl" style="left:1893.6px;top:231.8px;width:20.1px;height:19.2px;"></div>
<svg style="left:1896.5px;top:234.2px;opacity:0.55" width="14.4" height="14.4" viewBox="0 0 16 16"><rect x="2" y="2" width="12" height="12" fill="#caa"/><path d="M2 2 H8 V8 H2 Z M8 8 H14 V14 H8 Z" fill="#b03a3a"/></svg>
<div style="left:1905.1px;top:260.6px;width:11px;height:777.6px;background:#5e5e5e;border-radius:5px;opacity:.5"></div>
<div style="left:1905.6px;top:260.6px;width:10.6px;height:554.4px;background:linear-gradient(90deg,#989898,#848484);border:1px solid #3c3c3c;border-radius:5px"></div>
<svg style="left:1676.6px;top:266.2px;" width="14.4" height="14.4" viewBox="0 0 16 16"><path d="M9 2 L14 7 L12.4 8 L10.6 7.4 L8 10 L8.4 12.6 L7 13.4 L2.6 9 L3.6 7.6 L6 8 L8.6 5.4 L8 3.4 Z" fill="#e6e6e6"/><path d="M5 11 L2 14" stroke="#e6e6e6" stroke-width="1.4"/></svg>
<svg style="left:1697.8px;top:265.9px;" width="14.9" height="14.9" viewBox="0 0 16 16"><circle cx="5" cy="5" r="3" fill="#fff"/><circle cx="11" cy="6" r="2.6" fill="#9cc3f5"/><circle cx="7.6" cy="11" r="2.8" fill="#ececec"/></svg>
<span class="t" style="left:1718.4px;top:266.6px;font-size:10px;color:#333">›</span>
<svg style="left:1739px;top:265.7px;" width="15.4" height="15.4" viewBox="0 0 16 16"><path d="M3 4.6 L9 2.4 L13.4 4.4 L13.4 11.6 L7.6 14 L3 11.6 Z" fill="#f0a24a"/><path d="M3 4.6 L7.6 6.8 L13.4 4.4 M7.6 6.8 V14" stroke="#fbe0b8" stroke-width="1.1" fill="none"/></svg>
<span class="t" style="left:1757.8px;top:266.6px;font-size:10px">PitStopF</span>
<span class="t" style="left:1806.2px;top:266.6px;font-size:10px;color:#333">›</span>
<svg style="left:1825.4px;top:265.9px;" width="14.9" height="14.9" viewBox="0 0 16 16"><circle cx="8" cy="8" r="6.2" fill="#d8d8d8"/><path d="M8 1.8 A6.2 6.2 0 0 1 8 14.2 Z" fill="#c0504a"/><circle cx="6" cy="5.6" r="1.6" fill="#fff"/></svg>
<span class="t" style="left:1845.1px;top:266.6px;font-size:10px">Material</span>
<div style="left:1675.7px;top:302.9px;width:189.1px;height:35.5px;background:#7d7d7d;border:1px solid #474747;border-radius:3px"></div>
<div style="left:1677.1px;top:305.8px;width:186.2px;height:22.1px;background:#4f86d6;border-radius:2px"></div>
<svg style="left:1680.5px;top:307.4px;" width="18.2" height="18.2" viewBox="0 0 16 16"><defs><radialGradient id="mb" cx=".38" cy=".32" r=".7"><stop offset="0" stop-color="#8f9bff"/><stop offset=".35" stop-color="#3a48d8"/><stop offset="1" stop-color="#141a70"/></radialGradient></defs><circle cx="8" cy="8" r="7.4" fill="url(#mb)"/></svg>
<span class="t w" style="left:1702.1px;top:310.0px;font-size:10px">Material.003</span>
<svg style="left:1683.8px;top:329.8px;" width="5.8" height="6.2" viewBox="0 0 5.6 5.6"><path d="M0.6 0.6 H5 M0.6 2.8 H5 M0.6 5 H5" stroke="#e8e8e8" stroke-width="1.1"/></svg>
<span class="t" style="left:1649.8px;width:240px;text-align:center;top:325.4px;font-size:7px;color:#444;letter-spacing:-1px">· · · ·</span>
<div class="b rt" style="left:1873.9px;top:302.9px;width:19.9px;height:17.8px;"></div>
<svg style="left:1877.3px;top:305px;" width="13.4" height="13.4" viewBox="0 0 16 16"><path d="M8 2.5 V13.5 M2.5 8 H13.5" stroke="#f4f4f4" stroke-width="2.2"/></svg>
<div class="b rb nt" style="left:1873.9px;top:320.6px;width:19.9px;height:17.3px;"></div>
<svg style="left:1877.3px;top:322.6px;" width="13.4" height="13.4" viewBox="0 0 16 16"><path d="M2.5 8 H13.5" stroke="#f4f4f4" stroke-width="2.2"/></svg>
<div class="m" style="left:1873.9px;top:341.8px;width:19.9px;height:18px;"></div>
<svg style="left:1878.2px;top:345.1px;" width="11.5" height="11.5" viewBox="0 0 16 16"><path d="M3 5 L13 5 L8 12 Z" fill="#eee"/></svg>
<div class="tf rl" style="left:1678.6px;top:342.2px;width:111.8px;height:18.2px;"></div>
<div class="b rr nl" style="left:1790.4px;top:342.2px;width:24px;height:18.2px;"></div>
<svg style="left:1796.2px;top:345.1px;" width="13" height="13" viewBox="0 0 16 16"><path d="M8 3 V13 M3 8 H13" stroke="#1a1a1a" stroke-width="1.8"/><circle cx="8" cy="8" r="2" fill="#222"/></svg>
<div class="b rl" style="left:1822.6px;top:342.2px;width:19.2px;height:18.2px;"></div>
<svg style="left:1825.4px;top:345.1px;" width="13" height="13" viewBox="0 0 16 16"><path d="M3 3 H8 V8 H3 Z M8 8 H13 V13 H8 Z" fill="#e8e8e8" stroke="#666" stroke-width=".6"/></svg>
<div class="b rr nl" style="left:1841.8px;top:342.2px;width:18.7px;height:18.2px;"></div>
<svg style="left:1844.9px;top:345.1px;" width="13" height="13" viewBox="0 0 16 16"><path d="M3 10 L8 5 L13 10" stroke="#ddd" stroke-width="1.6" fill="none"/></svg>
<div class="m rl" style="left:1674.2px;top:372.5px;width:29.8px;height:19.2px;"></div>
<svg style="left:1677.1px;top:374.9px;" width="14.4" height="14.4" viewBox="0 0 16 16"><circle cx="8" cy="8" r="6.2" fill="#d8d8d8"/><path d="M8 1.8 A6.2 6.2 0 0 1 8 14.2 Z" fill="#c0504a"/><circle cx="6" cy="5.6" r="1.6" fill="#fff"/></svg>
<svg style="left:1694.6px;top:375.1px;" width="7.2" height="13.9" viewBox="0 0 7.2 14"><path d="M0.6 5.6 L3.6 1.4 L6.6 5.6 Z M0.6 8.4 L3.6 12.6 L6.6 8.4 Z" fill="#fff"/></svg>
<div class="tf rn nl" style="left:1704px;top:372.5px;width:46.1px;height:19.2px;background:linear-gradient(#b4b4b4,#c6c6c6)"></div>
<span class="t" style="left:1708.8px;width:39.8px;overflow:hidden;top:375.3px;font-size:10px">Materi</span>
<div class="b rn nl" style="left:1750.1px;top:372.5px;width:18.7px;height:19.2px;"></div>
<span class="t" style="left:1756.3px;top:375.3px;font-size:10px">F</span>
<div class="b rn nl" style="left:1768.8px;top:372.5px;width:20.2px;height:19.2px;"></div>
<svg style="left:1772.6px;top:376.3px;" width="12.5" height="12.5" viewBox="0 0 16 16"><path d="M8 2.5 V13.5 M2.5 8 H13.5" stroke="#efefef" stroke-width="2.2"/></svg>
<div class="b rr nl" style="left:1789px;top:372.5px;width:19.9px;height:19.2px;"></div>
<svg style="left:1792.8px;top:376.3px;" width="12.5" height="12.5" viewBox="0 0 16 16"><path d="M3.5 3.5 L12.5 12.5 M12.5 3.5 L3.5 12.5" stroke="#efefef" stroke-width="2"/></svg>
<div class="b" style="left:1820.6px;top:372.5px;width:18.7px;height:19.2px;"></div>
<svg style="left:1823px;top:375.6px;" width="13.9" height="13.9" viewBox="0 0 16 16"><rect x="2" y="2" width="5.4" height="5.4" fill="#f0f0f0"/><rect x="9" y="8.6" width="5" height="5.4" fill="#f0f0f0"/><path d="M7.4 4.6 C10 4.6 7 11 9 11.2" stroke="#ddd" stroke-width="1" fill="none"/><rect x="9" y="2" width="5" height="4" fill="#9ab0d0"/></svg>
<div class="m" style="left:1849px;top:372.5px;width:44.9px;height:19.2px;"></div>
<span class="t w" style="left:1854.7px;top:375.3px;font-size:10px">Donn</span>
<svg style="left:1881.6px;top:375.1px;" width="7.2" height="13.9" viewBox="0 0 7.2 14"><path d="M0.6 5.6 L3.6 1.4 L6.6 5.6 Z M0.6 8.4 L3.6 12.6 L6.6 8.4 Z" fill="#fff"/></svg>
<div class="sel rl" style="left:1674.2px;top:396.5px;width:53.3px;height:19.2px;"></div>
<span class="t" style="left:1680.5px;top:399.3px;font-size:10px">Surface</span>
<div class="m rn nl" style="left:1727.5px;top:396.5px;width:54.7px;height:19.2px;"></div>
<span class="t w" style="left:1731.8px;top:399.3px;font-size:10px">Fil de fer</span>
<div class="m rn nl" style="left:1782.2px;top:396.5px;width:55px;height:19.2px;"></div>
<span class="t w" style="left:1788.5px;top:399.3px;font-size:10px">Volume:</span>
<div class="m rr nl" style="left:1837.2px;top:396.5px;width:56.6px;height:19.2px;"></div>
<span class="t w" style="left:1745.5px;width:240px;text-align:center;top:399.3px;font-size:10px">Halo</span>
<div style="left:1667px;top:425.8px;width:236.6px;height:1.1px;background:#5c5c5c"></div>
<svg style="left:1677.6px;top:433px;" width="7.7" height="7.7" viewBox="0 0 9 9"><path d="M0 1.5 L9 1.5 L4.5 8 Z" fill="#1a1a1a"/></svg>
<span class="t" style="left:1691px;top:430.0px;font-size:11px">Prévisualisation</span>
<svg style="left:1665.6px;top:446.4px" width="254.4" height="134.4" viewBox="694 186 106 56"><defs><clipPath id="pv"><rect x="697.5" y="190.4" width="75.29999999999995" height="46.5"/></clipPath><radialGradient id="sp" cx=".40" cy=".36" r=".72"><stop offset="0" stop-color="#cfd3ff"/><stop offset=".07" stop-color="#a3a9f6"/><stop offset=".2" stop-color="#6a72e0"/><stop offset=".45" stop-color="#464ec8"/><stop offset=".78" stop-color="#2b3098"/><stop offset="1" stop-color="#171a5c"/></radialGradient></defs><g clip-path="url(#pv)"><rect x="697.5" y="190.4" width="75.29999999999995" height="46.5" fill="#353535"/><rect x="711.50" y="222.50" width="7.90" height="8.10" fill="#c4c4c4"/><rect x="711.50" y="206.30" width="7.90" height="8.10" fill="#c4c4c4"/><rect x="711.50" y="190.10" width="7.90" height="8.10" fill="#c4c4c4"/><rect x="719.40" y="214.40" width="7.90" height="8.10" fill="#c4c4c4"/><rect x="719.40" y="198.20" width="7.90" height="8.10" fill="#c4c4c4"/><rect x="719.40" y="182.00" width="7.90" height="8.10" fill="#c4c4c4"/><rect x="727.30" y="222.50" width="7.90" height="8.10" fill="#c4c4c4"/><rect x="727.30" y="206.30" width="7.90" height="8.10" fill="#c4c4c4"/><rect x="727.30" y="190.10" width="7.90" height="8.10" fill="#c4c4c4"/><rect x="735.20" y="214.40" width="7.90" height="8.10" fill="#c4c4c4"/><rect x="735.20" y="198.20" width="7.90" height="8.10" fill="#c4c4c4"/><rect x="735.20" y="182.00" width="7.90" height="8.10" fill="#c4c4c4"/><rect x="743.10" y="222.50" width="7.90" height="8.10" fill="#c4c4c4"/><rect x="743.10" y="206.30" width="7.90" height="8.10" fill="#c4c4c4"/><rect x="743.10" y="190.10" width="7.90" height="8.10" fill="#c4c4c4"/><rect x="751.00" y="214.40" width="7.90" height="8.10" fill="#c4c4c4"/><rect x="751.00" y="198.20" width="7.90" height="8.10" fill="#c4c4c4"/><rect x="751.00" y="182.00" width="7.90" height="8.10" fill="#c4c4c4"/><polygon points="711.50,238.70 701.20,243.17 701.20,233.69 711.50,230.60" fill="#b4b4b4"/><polygon points="711.50,222.50 701.20,224.22 701.20,214.74 711.50,214.40" fill="#b4b4b4"/><polygon points="711.50,206.30 701.20,205.26 701.20,195.79 711.50,198.20" fill="#b4b4b4"/><polygon points="711.50,190.10 701.20,186.31 701.20,176.83 711.50,182.00" fill="#b4b4b4"/><polygon points="701.20,233.69 686.00,238.26 686.00,226.75 701.20,224.22" fill="#b4b4b4"/><polygon points="701.20,214.74 686.00,215.24 686.00,203.73 701.20,205.26" fill="#b4b4b4"/><polygon points="701.20,195.79 686.00,192.23 686.00,180.72 701.20,186.31" fill="#b4b4b4"/><polygon points="701.20,176.83 686.00,169.21 686.00,157.70 701.20,167.36" fill="#b4b4b4"/><polygon points="758.90,230.60 769.40,233.75 769.40,224.25 758.90,222.50" fill="#b4b4b4"/><polygon points="758.90,214.40 769.40,214.75 769.40,205.24 758.90,206.30" fill="#b4b4b4"/><polygon points="758.90,198.20 769.40,195.74 769.40,186.24 758.90,190.10" fill="#b4b4b4"/><polygon points="758.90,182.00 769.40,176.73 769.40,167.23 758.90,173.90" fill="#b4b4b4"/><polygon points="769.40,243.26 785.00,250.03 785.00,238.44 769.40,233.75" fill="#b4b4b4"/><polygon points="769.40,224.25 785.00,226.85 785.00,215.26 769.40,214.75" fill="#b4b4b4"/><polygon points="769.40,205.24 785.00,203.67 785.00,192.08 769.40,195.74" fill="#b4b4b4"/><polygon points="769.40,186.24 785.00,180.50 785.00,168.91 769.40,176.73" fill="#b4b4b4"/><polygon points="687.80,230.60 695.70,230.60 690.43,234.40 681.48,234.40" fill="#adadad"/><polygon points="703.60,230.60 711.50,230.60 708.33,234.40 699.38,234.40" fill="#adadad"/><polygon points="719.40,230.60 727.30,230.60 726.24,234.40 717.29,234.40" fill="#adadad"/><polygon points="735.20,230.60 743.10,230.60 744.14,234.40 735.19,234.40" fill="#adadad"/><polygon points="751.00,230.60 758.90,230.60 762.04,234.40 753.09,234.40" fill="#adadad"/><polygon points="766.80,230.60 774.70,230.60 779.94,234.40 770.99,234.40" fill="#adadad"/><polygon points="690.43,234.40 699.38,234.40 692.62,240.50 681.98,240.50" fill="#adadad"/><polygon points="708.33,234.40 717.29,234.40 713.89,240.50 703.25,240.50" fill="#adadad"/><polygon points="726.24,234.40 735.19,234.40 735.17,240.50 724.53,240.50" fill="#adadad"/><polygon points="744.14,234.40 753.09,234.40 756.44,240.50 745.80,240.50" fill="#adadad"/><polygon points="762.04,234.40 770.99,234.40 777.71,240.50 767.08,240.50" fill="#adadad"/><polygon points="779.94,234.40 788.89,234.40 798.99,240.50 788.35,240.50" fill="#adadad"/><ellipse cx="736.3" cy="234" rx="15" ry="2.2" fill="#000" opacity=".55"/><ellipse cx="735.3" cy="212.6" rx="20.9" ry="21.8" fill="url(#sp)"/></g><rect x="697.5" y="190.4" width="75.29999999999995" height="46.5" fill="none" stroke="#2a2a2a" stroke-width="0.45"/></svg>
<div class="m rt" style="left:1863.1px;top:457.4px;width:30.7px;height:19.7px;"></div>
<svg style="left:1871.5px;top:460.3px;" width="13.9" height="13.9" viewBox="0 0 16 16"><rect x="4" y="3" width="8" height="10" fill="#d9c8c8"/></svg>
<div class="sel rn nt" style="left:1863.1px;top:477px;width:30.7px;height:19.7px;"></div>
<svg style="left:1871.5px;top:479.9px;" width="13.9" height="13.9" viewBox="0 0 16 16"><circle cx="8" cy="8" r="5.6" fill="#f2f2f2"/><circle cx="6.4" cy="6.2" r="1.8" fill="#fff"/></svg>
<div class="m rn nt" style="left:1863.1px;top:496.7px;width:30.7px;height:19.7px;"></div>
<svg style="left:1871.5px;top:499.5px;" width="13.9" height="13.9" viewBox="0 0 16 16"><path d="M3 5 L8 3 L13 5 V11 L8 13.4 L3 11 Z" fill="#d0d0d0"/><path d="M3 5 L8 7.4 L13 5 M8 7.4 V13.4" stroke="#888" stroke-width=".9" fill="none"/></svg>
<div class="m rn nt" style="left:1863.1px;top:516.3px;width:30.7px;height:19.7px;"></div>
<svg style="left:1871.5px;top:519.1px;" width="13.9" height="13.9" viewBox="0 0 16 16"><path d="M8 3 C11 3 12 5 12 7 C12 10 10 13 8 13 C6 13 4 10 4 7 C4 5 5 3 8 3 Z" fill="#d8d8d8"/><circle cx="3" cy="6" r="1.6" fill="#d8d8d8"/><circle cx="13" cy="6" r="1.6" fill="#d8d8d8"/></svg>
<div class="m rn nt" style="left:1863.1px;top:535.9px;width:30.7px;height:19.7px;"></div>
<svg style="left:1871.5px;top:538.8px;" width="13.9" height="13.9" viewBox="0 0 16 16"><path d="M4 13 C4 7 5 5 6 3 M8 13 C8 8 9 5 10 3 M12 13 C12 8 12.6 6 13.4 4" stroke="#d8d8d8" stroke-width="1.3" fill="none"/></svg>
<div class="m rb nt" style="left:1863.1px;top:555.5px;width:30.7px;height:19.7px;"></div>
<svg style="left:1871.5px;top:558.4px;" width="13.9" height="13.9" viewBox="0 0 16 16"><path d="M2 12 L7 6 L10 9 L12 7 L14 12 Z" fill="#e6e6e6"/><circle cx="11.4" cy="4.4" r="1.8" fill="#f4f4f4"/></svg>
<div style="left:1667px;top:584.2px;width:236.6px;height:1.1px;background:#5c5c5c"></div>
<svg style="left:1677.6px;top:591.8px;" width="7.7" height="7.7" viewBox="0 0 9 9"><path d="M0 1.5 L9 1.5 L4.5 8 Z" fill="#1a1a1a"/></svg>
<span class="t" style="left:1691px;top:588.9px;font-size:11px">Diffuse</span>
<div style="left:1674.2px;top:617.8px;width:104.2px;height:19.2px;background:#6873ee;border:1px solid #262626;border-radius:4px"></div>
<div class="m" style="left:1787px;top:617.8px;width:106.8px;height:19.2px;"></div>
<span class="t w" style="left:1794.7px;top:620.6px;font-size:10px">Lambert</span>
<svg style="left:1881.6px;top:620.4px;" width="7.2" height="13.9" viewBox="0 0 7.2 14"><path d="M0.6 5.6 L3.6 1.4 L6.6 5.6 Z M0.6 8.4 L3.6 12.6 L6.6 8.4 Z" fill="#fff"/></svg>
<div class="sl" style="left:1674.2px;top:641.3px;width:104.2px;height:19.2px;"><i style="width:80.0%"></i></div>
<span class="t" style="left:1606.3px;width:240px;text-align:center;top:644.1px;font-size:10px">Intensit: 0.800</span>

<div class="ck" style="left:1791.4px;top:645.4px;width:13.2px;height:13.2px;"></div>
<span class="t" style="left:1813.4px;top:645.0px;font-size:10px">Dégradé</span>
<div style="left:1667px;top:672px;width:236.6px;height:1.1px;background:#5c5c5c"></div>
<svg style="left:1677.6px;top:680.2px;" width="7.7" height="7.7" viewBox="0 0 9 9"><path d="M0 1.5 L9 1.5 L4.5 8 Z" fill="#1a1a1a"/></svg>
<span class="t" style="left:1691px;top:677.2px;font-size:11px">Spéculaire</span>
<div style="left:1674.2px;top:706.1px;width:104.2px;height:19.2px;background:#fdfdfd;border:1px solid #262626;border-radius:4px"></div>
<div class="m" style="left:1787px;top:706.1px;width:106.8px;height:19.2px;"></div>
<span class="t w" style="left:1794.7px;top:708.9px;font-size:10px">CookTorr</span>
<svg style="left:1881.6px;top:708.7px;" width="7.2" height="13.9" viewBox="0 0 7.2 14"><path d="M0.6 5.6 L3.6 1.4 L6.6 5.6 Z M0.6 8.4 L3.6 12.6 L6.6 8.4 Z" fill="#fff"/></svg>
<div class="sl" style="left:1674.2px;top:728.6px;width:104.2px;height:19.2px;"><i style="width:50.0%"></i></div>
<span class="t" style="left:1606.3px;width:240px;text-align:center;top:731.4px;font-size:10px">Intensit: 0.500</span>
<div class="ck" style="left:1791.4px;top:732.2px;width:13.2px;height:13.2px;"></div>
<span class="t" style="left:1813.4px;top:731.9px;font-size:10px">Dégradé</span>
<div class="num" style="left:1674.2px;top:752.6px;width:219.6px;height:19.2px;"></div>
<svg style="left:1677.6px;top:759.4px;" width="3.8" height="5.8" viewBox="0 0 3.84 5.76"><path d="M3.4 0.4 L0.6 2.9 L3.4 5.4 Z" fill="#5a5a5a"/></svg>
<svg style="left:1886.6px;top:759.4px;" width="3.8" height="5.8" viewBox="0 0 3.84 5.76"><path d="M0.4 0.4 L3.2 2.9 L0.4 5.4 Z" fill="#5a5a5a"/></svg>
<span class="t" style="left:1687.2px;top:755.4px;font-size:10px">Dureté:</span>
<span class="t" style="right:39.6px;top:755.4px;font-size:10px">50</span>
<div style="left:1667px;top:780.5px;width:236.6px;height:1.1px;background:#5c5c5c"></div>
<svg style="left:1677.6px;top:788.6px;" width="7.7" height="7.7" viewBox="0 0 9 9"><path d="M0 1.5 L9 1.5 L4.5 8 Z" fill="#1a1a1a"/></svg>
<span class="t" style="left:1691px;top:785.7px;font-size:11px">Ombrage</span>
<div class="sl" style="left:1674.2px;top:814.1px;width:104.2px;height:19.2px;"></div>
<svg style="left:1677.6px;top:820.8px;" width="3.8" height="5.8" viewBox="0 0 3.84 5.76"><path d="M3.4 0.4 L0.6 2.9 L3.4 5.4 Z" fill="#444"/></svg>
<svg style="left:1771.2px;top:820.8px;" width="3.8" height="5.8" viewBox="0 0 3.84 5.76"><path d="M0.4 0.4 L3.2 2.9 L0.4 5.4 Z" fill="#444"/></svg>
<span class="t" style="left:1606.3px;width:240px;text-align:center;top:816.9px;font-size:10px">Émission: 0.00</span>
<div class="ck" style="left:1791.4px;top:817.7px;width:13.2px;height:13.2px;"></div>
<span class="t" style="left:1813.4px;top:817.4px;font-size:10px">Sans ombrage</span>
<div class="sl" style="left:1674.2px;top:835px;width:104.2px;height:19.2px;"><i style="width:100.0%"></i></div>
<span class="t" style="left:1606.3px;width:240px;text-align:center;top:837.8px;font-size:10px">Ambian: 1.000</span>
<div class="ck" style="left:1791.4px;top:838.6px;width:13.2px;height:13.2px;"></div>
<span class="t" style="left:1813.4px;top:838.2px;font-size:10px">Ombrage tan...</span>
<div class="sl" style="left:1674.2px;top:855.8px;width:104.2px;height:19.2px;"></div>
<span class="t" style="left:1606.3px;width:240px;text-align:center;top:858.6px;font-size:10px">Transluc: 0.000</span>
<div class="ck" style="left:1791.4px;top:859.4px;width:13.2px;height:13.2px;"></div>
<span class="t" style="left:1813.4px;top:859.1px;font-size:10px">Interpolation...</span>
<div style="left:1667px;top:884.6px;width:236.6px;height:1.1px;background:#5c5c5c"></div>
<svg style="left:1677.6px;top:893.3px;" width="7.7" height="7.7" viewBox="0 0 9 9"><path d="M0 1.5 L9 1.5 L4.5 8 Z" fill="#1a1a1a"/></svg>
<div class="ck" style="left:1690.6px;top:890.2px;width:13.9px;height:13.9px;"></div>
<span class="t" style="left:1712.2px;top:890.3px;font-size:11px">Transparence</span>
<div class="m dis rl" style="left:1674.2px;top:917.8px;width:73px;height:19.2px;"></div>
<span class="t lg" style="left:1590.7px;width:240px;text-align:center;top:920.6px;font-size:10px">Masque</span>
<div class="sel dis rn nl" style="left:1747.2px;top:917.8px;width:73.4px;height:19.2px;"></div>
<span class="t lg" style="left:1751px;top:920.6px;font-size:10px">Transparenc</span>
<div class="m dis rr nl" style="left:1820.6px;top:917.8px;width:73.2px;height:19.2px;"></div>
<span class="t lg" style="left:1737.2px;width:240px;text-align:center;top:920.6px;font-size:10px">Raytracer</span>
<div class="sl dis" style="left:1674.2px;top:944.6px;width:104.2px;height:19.2px;"></div>
<span class="t g" style="left:1606.3px;width:240px;text-align:center;top:947.4px;font-size:10px">Alpha: 1.000</span>
<div class="sl dis" style="left:1789px;top:944.6px;width:104.9px;height:19.2px;"></div>
<span class="t g" style="left:1721.4px;width:240px;text-align:center;top:947.4px;font-size:10px">Fresnel: 0.000</span>
<div class="sl dis" style="left:1674.2px;top:966.7px;width:104.2px;height:19.2px;"></div>
<span class="t g" style="left:1606.3px;width:240px;text-align:center;top:969.5px;font-size:10px">Spécula: 1.000</span>
<div class="sl dis" style="left:1789px;top:966.7px;width:104.9px;height:19.2px;"></div>
<span class="t g" style="left:1721.4px;width:240px;text-align:center;top:969.5px;font-size:10px">Mélang: 1.250</span>
<div style="left:1667px;top:993.1px;width:236.6px;height:1.1px;background:#5c5c5c"></div>
<svg style="left:1677.6px;top:1001.3px;" width="7.7" height="7.7" viewBox="0 0 9 9"><path d="M1.5 0 L8 4.5 L1.5 9 Z" fill="#1a1a1a"/></svg>
<div class="ck" style="left:1690.6px;top:998.2px;width:13.9px;height:13.9px;"></div>
<span class="t" style="left:1712.2px;top:998.3px;font-size:11px">Miroir</span>
<div style="left:1667px;top:1016.2px;width:236.6px;height:1.1px;background:#5c5c5c"></div>
<svg style="left:1677.6px;top:1023.8px;" width="7.7" height="7.7" viewBox="0 0 9 9"><path d="M1.5 0 L8 4.5 L1.5 9 Z" fill="#1a1a1a"/></svg>
<div class="ck" style="left:1690.6px;top:1020.7px;width:13.9px;height:13.9px;"></div>
<span class="t" style="left:1712.2px;top:1020.9px;font-size:11px">Dispersion sub-surfacique</span>
</div></div></body></html>
